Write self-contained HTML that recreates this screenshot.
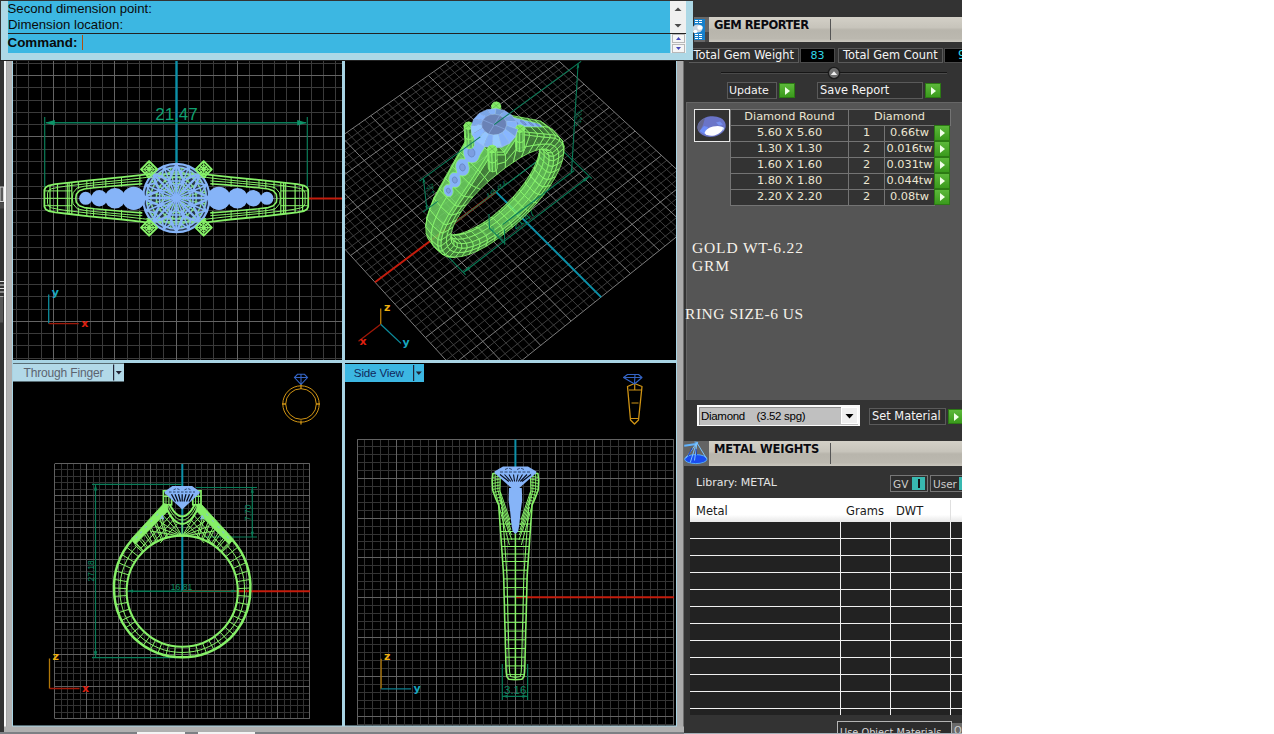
<!DOCTYPE html>
<html><head><meta charset="utf-8"><title>Gem Reporter</title>
<style>
html,body{margin:0;padding:0;background:#fff;}
body{width:1274px;height:734px;overflow:hidden;position:relative;font-family:"DejaVu Sans","Liberation Sans",sans-serif;}
#app{position:absolute;left:0;top:0;width:962px;height:734px;background:#333;overflow:hidden;}
.abs{position:absolute;box-sizing:border-box;}
#cmd{left:1px;top:1px;width:692px;height:59px;background:#add8e6;z-index:5;}
#cmdtop{left:7px;top:0;width:662px;height:32px;background:#3cb7e2;font:13.200px/16px "Liberation Sans",sans-serif;color:#0a0a0a;padding:0;text-indent:-0.5px;white-space:nowrap;}
#cmdline{left:7px;top:33px;width:662px;height:19px;background:#3cb7e2;font:bold 13.400px/17px "Liberation Sans",sans-serif;color:#0a0a0a;padding:0;text-indent:-0.5px;}
#cmdsep{left:7px;top:32px;width:678px;height:1px;background:#222;}
#sb1{left:669px;top:0;width:16px;height:32px;background:#f0f0f0;}
#sb2{left:670px;top:33px;width:15px;height:19px;background:#f4f4f4;}
.hdr{left:694px;width:268px;height:25px;background:linear-gradient(#d3d0c7,#c7c4bb 42%,#b8b5ac 52%,#bbb8af 86%,#cac7be);font:bold 11.5px/12px "DejaVu Sans","Liberation Sans",sans-serif;color:#0a0a10;}
.hdr span{position:absolute;left:20px;top:1.5px;}
.hdr i{position:absolute;left:136px;top:2px;width:1px;height:21px;background:#555;}
.lbl{background:#2e2e2e;border:1px solid #5a5a5a;color:#f4f4f4;font:11.4px/13px "DejaVu Sans","Liberation Sans",sans-serif;white-space:nowrap;overflow:hidden;}
.blk{background:#000;border:1px solid #4a4a4a;color:#2fd8e8;font:11px/13px "DejaVu Sans","Liberation Sans",sans-serif;text-align:center;overflow:hidden;}
.go{background:linear-gradient(#5cb83a,#3a9a1c);border:1px solid #2c7a14;}
.go:after{content:"";position:absolute;left:5px;top:3px;border-left:5px solid #f0ffe8;border-top:4px solid transparent;border-bottom:4px solid transparent;}
#gpanel{left:686px;top:102px;width:276px;height:298px;background:#555;border-top:1px solid #666;border-left:1px solid #666;}
.gt{background:#333;border:1px solid #747474;color:#ece6d2;font:11.3px/14.500px "DejaVu Sans","Liberation Sans",sans-serif;text-align:center;white-space:nowrap;overflow:hidden;}
.ser{font-family:"Liberation Serif","DejaVu Serif",serif;color:#f6f2ea;font-size:15.5px;line-height:18px;white-space:nowrap;letter-spacing:0.2px;}
.mrow{left:690px;width:272px;height:1px;background:#f0f0f0;}
.mcol{top:522px;width:1px;height:193px;background:#f0f0f0;}
.vlabel{font:12.5px/18px "Liberation Sans",sans-serif;white-space:nowrap;}
</style></head>
<body>
<div id="app">
<svg class="abs" style="left:0;top:0" width="684" height="734" viewBox="0 0 684 734">
<defs><clipPath id="cTL"><rect x="13" y="61" width="329" height="299"/></clipPath><clipPath id="cTR"><rect x="345" y="61" width="331" height="299"/></clipPath><clipPath id="cBL"><rect x="13" y="363" width="329" height="362.500"/></clipPath><clipPath id="cBR"><rect x="345" y="363" width="331" height="362.500"/></clipPath></defs>
<rect x="0" y="0" width="684" height="734" fill="#333"/>
<rect x="4" y="60" width="2.500" height="674" fill="#fafafa"/>
<rect x="6.500" y="60" width="6" height="674" fill="#b2b2b2"/>
<rect x="12" y="60" width="665" height="667" fill="#a8d4e4"/>
<rect x="677" y="60" width="6.500" height="674" fill="#aaaaaa"/>
<rect x="4" y="726.500" width="680" height="5.500" fill="#b0b0b0"/>
<rect x="0" y="732" width="684" height="2" fill="#7c8084"/>
<rect x="137" y="732" width="48" height="2" fill="#f4f4f4"/><rect x="198" y="732" width="57" height="2" fill="#f4f4f4"/>
<rect x="0" y="60" width="693" height="1" fill="#222"/>
<rect x="0" y="187" width="3.500" height="14.500" fill="#5a5a5a" stroke="#d0d0d0" stroke-width="1"/>
<rect x="0" y="202.500" width="4" height="6" fill="#4c4c4c"/>
<path d="M0 281.500h4M0 285h4M0 288.500h4M0 292h4" stroke="#d8d8d8" stroke-width="1.200"/>
<rect x="0" y="296.500" width="3" height="26" fill="#565656"/><rect x="0" y="296" width="3.500" height="1" fill="#aaa"/>
<rect x="13" y="61" width="329" height="299" fill="#000"/>
<rect x="345" y="61" width="331" height="299" fill="#000"/>
<rect x="13" y="363" width="329" height="362.500" fill="#000"/>
<rect x="345" y="363" width="331" height="362.500" fill="#000"/>
<g clip-path="url(#cTL)"><path d="M16.5 61V360M28.5 61V360M41.5 61V360M65.5 61V360M77.5 61V360M90.5 61V360M102.5 61V360M127.5 61V360M139.5 61V360M151.5 61V360M163.5 61V360M188.5 61V360M200.5 61V360M213.5 61V360M225.5 61V360M249.5 61V360M262.5 61V360M274.5 61V360M286.5 61V360M311.5 61V360M323.5 61V360M335.5 61V360M13 63.5H342M13 87.5H342M13 100.5H342M13 112.5H342M13 124.5H342M13 149.5H342M13 161.5H342M13 173.5H342M13 186.5H342M13 210.5H342M13 222.5H342M13 235.5H342M13 247.5H342M13 272.5H342M13 284.5H342M13 296.5H342M13 309.5H342M13 333.5H342M13 345.5H342M13 358.5H342" stroke="#3a3a3a" stroke-width="1.0" fill="none"/>
<path d="M53.5 61V360M114.5 61V360M176.5 61V360M237.5 61V360M299.5 61V360M13 75.5H342M13 136.5H342M13 198.5H342M13 259.5H342M13 321.5H342" stroke="#646464" stroke-width="1.0" fill="none"/>
<path d="M176.500 61V198.3" stroke="#0c90a8" stroke-width="2.400" fill="none"/>
<path d="M308 198.600H342" stroke="#c41c0c" stroke-width="2" fill="none"/>
<path d="M44.700 117V187M307.300 117V187" stroke="#0a7c58" stroke-width="1.200" fill="none"/>
<path d="M46 122.700H306" stroke="#0a7c58" stroke-width="1.600" fill="none"/>
<path d="M45.300 122.700l9.500 -2.800v5.600ZM306.700 122.700l-9.500 -2.800v5.600Z" fill="#0c9468"/>
<text x="176.500" y="119.800" text-anchor="middle" fill="#10a070" font-family="Liberation Sans,sans-serif" font-size="17">21.47</text>
<path d="M206.3 174.3 L210 174.8 L230.3 177.1 L263.3 180.3 L283.3 182.6 L297.3 184.2 L304 185.6 L307 187.4 L308.2 190 L308.2 206.6 L307 209.2 L304 211 L297.3 212.4 L283.3 214 L263.3 216.3 L230.3 219.5 L210 221.8 L206.3 222.3" stroke="#86f068" stroke-width="1.800" fill="none" stroke-linejoin="round"/>
<path d="M206.3 177.4 L210 177.9 L230.3 180.2 L263.3 183.4 L283.3 185.7 L294.2 187.3 L300.9 188.7 L303.9 190.5 L305.1 193.1 L305.1 203.5 L303.9 206.1 L300.9 207.9 L294.2 209.3 L283.3 210.9 L263.3 213.2 L230.3 216.4 L210 218.7 L206.3 219.2" stroke="#86f068" stroke-width="1" fill="none" stroke-linejoin="round"/>
<path d="M210.3 183.7 L226.3 184.9 L242.3 186.3 L258.3 187.8 L268.3 189 L273.3 190.8 L276.3 194.3 L276.8 198.3 L276.3 202.3 L273.3 205.8 L268.3 207.6 L258.3 208.8 L242.3 210.3 L226.3 211.7 L210.3 212.9" stroke="#86f068" stroke-width="1.600" fill="none" stroke-linejoin="round"/>
<path d="M210.3 180.9 L226.3 182.1 L242.3 183.5 L258.3 185 L268.3 186.2 L275.3 187.8 L279.6 192.8 L280.3 198.3 L279.6 203.8 L275.3 208.8 L268.3 210.4 L258.3 211.6 L242.3 213.1 L226.3 214.5 L210.3 215.7" stroke="#86f068" stroke-width="1" fill="none" stroke-linejoin="round"/>
<path d="M212.7 175.1V185.6M212.7 211V221.5M231.1 177.2V186.7M231.1 209.9V219.4M246.8 178.7V187.5M246.8 209.1V217.9M259 179.9V188M259 208.6V216.7M265.8 180.6V188.4M265.8 208.2V216M274 181.5V188.9M274 207.7V215.1" stroke="#86f068" stroke-width="1" fill="none"/>
<path d="M280.8 182.3V214.3M283.5 182.6V214M285.3 182.8V213.8M295.1 183.9V212.7M302.6 185.3V211.3" stroke="#86f068" stroke-width="1.200" fill="none"/>
<path d="M280.8 190.9H307.8M280.8 198.3H307.8M280.8 205.7H307.8" stroke="#86f068" stroke-width="1" fill="none"/>
<circle cx="218.9" cy="198.3" r="11.6" fill="#86b4f8"/>
<circle cx="237.5" cy="198.3" r="10.3" fill="#86b4f8"/>
<circle cx="253.3" cy="198.3" r="8.2" fill="#86b4f8"/>
<circle cx="266.9" cy="198.3" r="6.5" fill="#86b4f8"/>
<path d="M146.3 174.3 L142.6 174.8 L122.3 177.1 L89.3 180.3 L69.3 182.6 L55.3 184.2 L48.6 185.6 L45.6 187.4 L44.4 190 L44.4 206.6 L45.6 209.2 L48.6 211 L55.3 212.4 L69.3 214 L89.3 216.3 L122.3 219.5 L142.6 221.8 L146.3 222.3" stroke="#86f068" stroke-width="1.800" fill="none" stroke-linejoin="round"/>
<path d="M146.3 177.4 L142.6 177.9 L122.3 180.2 L89.3 183.4 L69.3 185.7 L58.4 187.3 L51.7 188.7 L48.7 190.5 L47.5 193.1 L47.5 203.5 L48.7 206.1 L51.7 207.9 L58.4 209.3 L69.3 210.9 L89.3 213.2 L122.3 216.4 L142.6 218.7 L146.3 219.2" stroke="#86f068" stroke-width="1" fill="none" stroke-linejoin="round"/>
<path d="M142.3 183.7 L126.3 184.9 L110.3 186.3 L94.3 187.8 L84.3 189 L79.3 190.8 L76.3 194.3 L75.8 198.3 L76.3 202.3 L79.3 205.8 L84.3 207.6 L94.3 208.8 L110.3 210.3 L126.3 211.7 L142.3 212.9" stroke="#86f068" stroke-width="1.600" fill="none" stroke-linejoin="round"/>
<path d="M142.3 180.9 L126.3 182.1 L110.3 183.5 L94.3 185 L84.3 186.2 L77.3 187.8 L73 192.8 L72.3 198.3 L73 203.8 L77.3 208.8 L84.3 210.4 L94.3 211.6 L110.3 213.1 L126.3 214.5 L142.3 215.7" stroke="#86f068" stroke-width="1" fill="none" stroke-linejoin="round"/>
<path d="M139.9 175.1V185.6M139.9 211V221.5M121.5 177.2V186.7M121.5 209.9V219.4M105.8 178.7V187.5M105.8 209.1V217.9M93.6 179.9V188M93.6 208.6V216.7M86.8 180.6V188.4M86.8 208.2V216M78.6 181.5V188.9M78.6 207.7V215.1" stroke="#86f068" stroke-width="1" fill="none"/>
<path d="M71.8 182.3V214.3M69.1 182.6V214M67.3 182.8V213.8M57.5 183.9V212.7M50 185.3V211.3" stroke="#86f068" stroke-width="1.200" fill="none"/>
<path d="M71.8 190.9H44.8M71.8 198.3H44.8M71.8 205.7H44.8" stroke="#86f068" stroke-width="1" fill="none"/>
<circle cx="133.7" cy="198.3" r="11.6" fill="#86b4f8"/>
<circle cx="115.1" cy="198.3" r="10.3" fill="#86b4f8"/>
<circle cx="99.3" cy="198.3" r="8.2" fill="#86b4f8"/>
<circle cx="85.7" cy="198.3" r="6.5" fill="#86b4f8"/>
<g transform="translate(0 198) scale(1 1.030) translate(0 -198)"><circle cx="176.3" cy="198" r="14" stroke="#86f068" stroke-width="1.400" fill="none"/>
<circle cx="176.3" cy="198" r="20" stroke="#86f068" stroke-width="1.400" fill="none"/>
<circle cx="176.3" cy="198" r="25.5" stroke="#86f068" stroke-width="1.400" fill="none"/>
<circle cx="176.3" cy="198" r="29.5" stroke="#86f068" stroke-width="1.400" fill="none"/>
<path d="M182.2 199.2L205.2 203.8M181.3 201.3L200.8 214.4M179.6 203L192.7 222.5M177.5 203.9L182.1 226.9M175.1 203.9L170.5 226.9M173 203L159.9 222.5M171.3 201.3L151.8 214.4M170.4 199.2L147.4 203.8M170.4 196.8L147.4 192.2M171.3 194.7L151.8 181.6M173 193L159.9 173.5M175.1 192.1L170.5 169.1M177.5 192.1L182.1 169.1M179.6 193L192.7 173.5M181.3 194.7L200.8 181.6M182.2 196.8L205.2 192.2" stroke="#86f068" stroke-width="1.200" fill="none"/>
<path d="M146.3 221.2H206.3M146.3 174.8H206.3M146.3 218.2H206.3M146.3 177.8H206.3" stroke="#86f068" stroke-width="1.600" fill="none"/>
<circle cx="176.3" cy="198" r="33.8" fill="#86b4f8" fill-opacity="0.30"/>
<circle cx="176.3" cy="198" r="33.2" stroke="#86b4f8" stroke-width="2.200" fill="none"/>
<circle cx="176.3" cy="198" r="30.2" stroke="#86b4f8" stroke-width="1.200" fill="none"/>
<path d="M176.3 196 L176.3 165.2M177.7 196.6 L199.5 174.8M178.3 198 L209.1 198M177.7 199.4 L199.5 221.2M176.3 200 L176.3 230.8M174.9 199.4 L153.1 221.2M174.3 198 L143.5 198M174.9 196.6 L153.1 174.8" stroke="#86b4f8" stroke-width="2.200" fill="none"/>
<path d="M177.1 196.2 L188.9 167.7M178.1 197.2 L206.6 185.4M178.1 198.8 L206.6 210.6M177.1 199.8 L188.9 228.3M175.5 199.8 L163.7 228.3M174.5 198.8 L146 210.6M174.5 197.2 L146 185.4M175.5 196.2 L163.7 167.7M176.3 165.2 L181.3 173 L188.9 167.7M188.9 167.7 L190.5 176.8 L199.5 174.8M199.5 174.8 L197.5 183.8 L206.6 185.4M206.6 185.4 L201.3 193 L209.1 198M209.1 198 L201.3 203 L206.6 210.6M206.6 210.6 L197.5 212.2 L199.5 221.2M199.5 221.2 L190.5 219.2 L188.9 228.3M188.9 228.3 L181.3 223 L176.3 230.8M176.3 230.8 L171.3 223 L163.7 228.3M163.7 228.3 L162.1 219.2 L153.1 221.2M153.1 221.2 L155.1 212.2 L146 210.6M146 210.6 L151.3 203 L143.5 198M143.5 198 L151.3 193 L146 185.4M146 185.4 L155.1 183.8 L153.1 174.8M153.1 174.8 L162.1 176.8 L163.7 167.7M163.7 167.7 L171.3 173 L176.3 165.2M176.3 165.2 L183.2 181.4 L199.5 174.8M183.2 181.4 L192.9 191.1M181.3 173 L183.2 181.4 L190.5 176.8M183.2 181.4 L183.8 193M183.2 181.4 L174.5 189.2M199.5 174.8 L192.9 191.1 L209.1 198M192.9 191.1 L192.9 204.9M197.5 183.8 L192.9 191.1 L201.3 193M192.9 191.1 L185.1 199.8M192.9 191.1 L181.3 190.5M209.1 198 L192.9 204.9 L199.5 221.2M192.9 204.9 L183.2 214.6M201.3 203 L192.9 204.9 L197.5 212.2M192.9 204.9 L181.3 205.5M192.9 204.9 L185.1 196.2M199.5 221.2 L183.2 214.6 L176.3 230.8M183.2 214.6 L169.4 214.6M190.5 219.2 L183.2 214.6 L181.3 223M183.2 214.6 L174.5 206.8M183.2 214.6 L183.8 203M176.3 230.8 L169.4 214.6 L153.1 221.2M169.4 214.6 L159.7 204.9M171.3 223 L169.4 214.6 L162.1 219.2M169.4 214.6 L168.8 203M169.4 214.6 L178.1 206.8M153.1 221.2 L159.7 204.9 L143.5 198M159.7 204.9 L159.7 191.1M155.1 212.2 L159.7 204.9 L151.3 203M159.7 204.9 L167.5 196.2M159.7 204.9 L171.3 205.5M143.5 198 L159.7 191.1 L153.1 174.8M159.7 191.1 L169.4 181.4M151.3 193 L159.7 191.1 L155.1 183.8M159.7 191.1 L171.3 190.5M159.7 191.1 L167.5 199.8M153.1 174.8 L169.4 181.4 L176.3 165.2M169.4 181.4 L183.2 181.4M162.1 176.8 L169.4 181.4 L171.3 173M169.4 181.4 L178.1 189.2M169.4 181.4 L168.8 193" stroke="#86b4f8" stroke-width="1.500" fill="none" stroke-linejoin="round"/>
<circle cx="176.3" cy="198" r="3.500" fill="#86b4f8"/></g>
<path d="M149.1 161.2 L157.2 169.3 L149.1 177.4 L141 169.3ZM149.1 164.3 L154.1 169.3 L149.1 174.3 L144.1 169.3ZM149.1 166.9 L151.5 169.3 L149.1 171.7 L146.7 169.3ZM149.1 161.2V177.4M141 169.3H157.2M145 165.2L153.2 173.4M145 173.4L153.2 165.2" stroke="#86f068" stroke-width="1.100" fill="none" stroke-linejoin="round"/>
<path d="M149.1 161.2 L157.2 169.3 L149.1 177.4 L141 169.3Z" stroke="#86f068" stroke-width="1.800" fill="none" stroke-linejoin="round"/>
<path d="M149.1 219.5 L157.2 227.6 L149.1 235.7 L141 227.6ZM149.1 222.6 L154.1 227.6 L149.1 232.6 L144.1 227.6ZM149.1 225.2 L151.5 227.6 L149.1 230 L146.7 227.6ZM149.1 219.5V235.7M141 227.6H157.2M145 223.5L153.2 231.7M145 231.7L153.2 223.5" stroke="#86f068" stroke-width="1.100" fill="none" stroke-linejoin="round"/>
<path d="M149.1 219.5 L157.2 227.6 L149.1 235.7 L141 227.6Z" stroke="#86f068" stroke-width="1.800" fill="none" stroke-linejoin="round"/>
<path d="M203.7 161.2 L211.8 169.3 L203.7 177.4 L195.6 169.3ZM203.7 164.3 L208.7 169.3 L203.7 174.3 L198.7 169.3ZM203.7 166.9 L206.1 169.3 L203.7 171.7 L201.3 169.3ZM203.7 161.2V177.4M195.6 169.3H211.8M199.6 165.2L207.8 173.4M199.6 173.4L207.8 165.2" stroke="#86f068" stroke-width="1.100" fill="none" stroke-linejoin="round"/>
<path d="M203.7 161.2 L211.8 169.3 L203.7 177.4 L195.6 169.3Z" stroke="#86f068" stroke-width="1.800" fill="none" stroke-linejoin="round"/>
<path d="M203.7 219.5 L211.8 227.6 L203.7 235.7 L195.6 227.6ZM203.7 222.6 L208.7 227.6 L203.7 232.6 L198.7 227.6ZM203.7 225.2 L206.1 227.6 L203.7 230 L201.3 227.6ZM203.7 219.5V235.7M195.6 227.6H211.8M199.6 223.5L207.8 231.7M199.6 231.7L207.8 223.5" stroke="#86f068" stroke-width="1.100" fill="none" stroke-linejoin="round"/>
<path d="M203.7 219.5 L211.8 227.6 L203.7 235.7 L195.6 227.6Z" stroke="#86f068" stroke-width="1.800" fill="none" stroke-linejoin="round"/>
<path d="M48.7 323.6V294.6" stroke="#0c8c9c" stroke-width="1.3" fill="none"/>
<path d="M48.7 323.6H78.7" stroke="#a01808" stroke-width="1.3" fill="none"/>
<text x="51.7" y="296.1" fill="#18a8c0" font-family="DejaVu Sans,Liberation Sans,sans-serif" font-weight="bold" font-size="11">y</text>
<text x="81.2" y="326.8" fill="#e02010" font-family="DejaVu Sans,Liberation Sans,sans-serif" font-weight="bold" font-size="11">x</text></g>
<g clip-path="url(#cTR)"><path d="M506 21.1L710.2 209.8M516.1 21.6L285.2 183.7M500.5 24.9L704.7 214.3M520.8 26L289.8 188.6M495.1 28.7L699.1 218.8M525.6 30.4L294.3 193.7M489.6 32.5L693.5 223.2M530.3 34.7L298.9 198.7M478.6 40.2L682.2 232.3M539.9 43.6L308.1 208.8M473.1 44.1L676.5 236.8M544.8 48L312.8 213.9M467.6 48L670.8 241.3M549.6 52.5L317.4 219M462 51.9L665.1 245.9M554.5 56.9L322.1 224.2M450.8 59.7L653.7 255.1M564.3 65.9L331.5 234.5M445.2 63.6L647.9 259.7M569.2 70.5L336.3 239.7M439.6 67.5L642.1 264.3M574.1 75L341 244.9M433.9 71.5L636.3 268.9M579.1 79.6L345.8 250.2M422.6 79.4L624.6 278.3M589.1 88.8L355.5 260.8M416.9 83.4L618.8 283M594.1 93.4L360.3 266.1M411.2 87.4L612.9 287.7M599.2 98.1L365.2 271.4M405.5 91.4L607 292.4M604.2 102.7L370.1 276.8M393.9 99.5L595.1 301.9M614.4 112.1L379.9 287.6M388.1 103.5L589.1 306.6M619.6 116.8L384.9 293.1M382.3 107.6L583.2 311.4M624.7 121.6L389.9 298.5M376.5 111.7L577.2 316.2M629.9 126.3L394.9 304M364.8 119.9L565.1 325.9M640.3 135.9L404.9 315.1M358.9 124L559 330.7M645.6 140.8L410 320.6M353 128.1L552.9 335.6M650.8 145.6L415.1 326.2M347.1 132.2L546.8 340.5M656.1 150.5L420.2 331.9M335.2 140.6L534.5 350.3M666.8 160.3L430.5 343.2M329.2 144.8L528.3 355.3M672.1 165.2L435.7 348.9M323.2 148.9L522.1 360.2M677.5 170.1L440.9 354.6M317.2 153.2L515.9 365.2M682.9 175.1L446.2 360.3M305.1 161.6L503.4 375.2M693.8 185.1L456.7 371.9M299 165.9L497.1 380.2M699.2 190.2L462 377.7M292.9 170.1L490.8 385.3M704.7 195.2L467.4 383.6M286.8 174.4L484.5 390.3M710.3 200.3L472.7 389.5" stroke="#444" stroke-width="0.900" fill="none"/>
<path d="M511.4 17.3L715.8 205.4M511.4 17.3L280.7 178.7M484.1 36.4L687.8 227.8M535.1 39.1L303.5 203.7M456.4 55.8L659.4 250.5M559.4 61.4L326.8 229.3M428.3 75.4L630.5 273.6M584.1 84.2L350.6 255.5M399.7 95.4L601.1 297.1M609.3 107.4L375 282.2M370.7 115.8L571.1 321M635.1 131.1L399.9 309.5M341.2 136.4L540.7 345.4M661.4 155.4L425.4 337.5M311.2 157.4L509.7 370.2M688.3 180.1L451.4 366.1M280.7 178.7L478.1 395.4M715.8 205.4L478.1 395.4" stroke="#7c7c7c" stroke-width="1" fill="none"/>
<path d="M496 191.9L375 282.2" stroke="#c41c0c" stroke-width="2" fill="none"/>
<path d="M496 191.9L601.1 297.1" stroke="#0c90a8" stroke-width="2" fill="none"/>
<path d="M544.5 155.7L446.2 229.1" stroke="#0a7c58" stroke-width="1.1" fill="none"/>
<path d="M544.5 155.7 L538.8 159.2 L538.8 160.8Z" fill="#0a7c58"/>
<path d="M446.2 229.1 L452.1 223.8 L452.2 225.4Z" fill="#0a7c58"/>
<text transform="matrix(5.850 -4.362 0.103 3.742 496.0 190.8)" text-anchor="middle" fill="#0c8c64" font-family="Liberation Sans,sans-serif" font-size="1.4">16.81</text>
<path d="M589.5 176.3L463.3 272.5" stroke="#0a7c58" stroke-width="1.1" fill="none"/>
<path d="M562.5 150.6L591.8 178.6" stroke="#0a7c58" stroke-width="1.1" fill="none"/>
<path d="M436.8 244.7L465.6 274.9" stroke="#0a7c58" stroke-width="1.1" fill="none"/>
<path d="M589.5 176.3 L584.9 181.8 L582.6 179.6Z" fill="#0a7c58"/>
<path d="M463.3 272.5 L470.5 269 L468.2 266.6Z" fill="#0a7c58"/>
<text transform="matrix(5.868 -4.464 5.144 5.152 526.0 222.0)" text-anchor="middle" fill="#0c8c64" font-family="Liberation Sans,sans-serif" font-size="1.4">21.47</text>
<path d="M519.7 218.2 L521.1 219.7 L529.4 211.4 L527.5 210.5Z" fill="#4c9143" stroke="#8cf86e" stroke-width="0.800" stroke-linejoin="round" fill-opacity="0.840"/>
<path d="M511.6 225.4 L512.3 227.5 L521.1 219.7 L519.7 218.2Z" fill="#4c9143" stroke="#8cf86e" stroke-width="0.800" stroke-linejoin="round" fill-opacity="0.840"/>
<path d="M506.1 204.3 L507.6 205.8 L514.4 198.8 L513.1 197Z" fill="#66c35a" stroke="#8cf86e" stroke-width="0.800" stroke-linejoin="round" fill-opacity="0.840"/>
<path d="M527.5 210.5 L529.4 211.4 L537.2 202.8 L534.7 202.5Z" fill="#4c9143" stroke="#8cf86e" stroke-width="0.800" stroke-linejoin="round" fill-opacity="0.840"/>
<path d="M498.6 211.1 L500.5 212.3 L507.6 205.8 L506.1 204.3Z" fill="#65c059" stroke="#8cf86e" stroke-width="0.800" stroke-linejoin="round" fill-opacity="0.840"/>
<path d="M513.1 197 L514.4 198.8 L520.6 191.6 L519.5 189.4Z" fill="#67c55b" stroke="#8cf86e" stroke-width="0.800" stroke-linejoin="round" fill-opacity="0.840"/>
<path d="M503.2 232 L503.3 234.6 L512.3 227.5 L511.6 225.4Z" fill="#4c9243" stroke="#8cf86e" stroke-width="0.800" stroke-linejoin="round" fill-opacity="0.840"/>
<path d="M491 217.4 L493.2 218.3 L500.5 212.3 L498.6 211.1Z" fill="#62bb57" stroke="#8cf86e" stroke-width="0.800" stroke-linejoin="round" fill-opacity="0.840"/>
<path d="M534.7 202.5 L537.2 202.8 L544.3 194 L541.2 194.4Z" fill="#4c9143" stroke="#8cf86e" stroke-width="0.800" stroke-linejoin="round" fill-opacity="0.840"/>
<path d="M507.6 205.8 L511.4 209.5 L518.2 202.6 L514.4 198.8Z" fill="#76e269" stroke="#8cf86e" stroke-width="0.800" stroke-linejoin="round" fill-opacity="0.840"/>
<path d="M519.5 189.4 L520.6 191.6 L526.1 184.2 L525.3 181.8Z" fill="#67c45b" stroke="#8cf86e" stroke-width="0.800" stroke-linejoin="round" fill-opacity="0.840"/>
<path d="M518.2 216.5 L519.7 218.2 L527.5 210.5 L525.4 209.3Z" fill="#529d49" stroke="#8cf86e" stroke-width="0.800" stroke-linejoin="round" fill-opacity="0.840"/>
<path d="M500.5 212.3 L504.2 216 L511.4 209.5 L507.6 205.8Z" fill="#74dd67" stroke="#8cf86e" stroke-width="0.800" stroke-linejoin="round" fill-opacity="0.840"/>
<path d="M510.6 223.2 L511.6 225.4 L519.7 218.2 L518.2 216.5Z" fill="#529c48" stroke="#8cf86e" stroke-width="0.800" stroke-linejoin="round" fill-opacity="0.840"/>
<path d="M514.4 198.8 L518.2 202.6 L524.4 195.5 L520.6 191.6Z" fill="#77e369" stroke="#8cf86e" stroke-width="0.800" stroke-linejoin="round" fill-opacity="0.840"/>
<path d="M525.4 209.3 L527.5 210.5 L534.7 202.5 L532.1 201.9Z" fill="#529d48" stroke="#8cf86e" stroke-width="0.800" stroke-linejoin="round" fill-opacity="0.840"/>
<path d="M495 238 L494.4 241.1 L503.3 234.6 L503.2 232Z" fill="#4c9043" stroke="#8cf86e" stroke-width="0.800" stroke-linejoin="round" fill-opacity="0.840"/>
<path d="M483.2 222.8 L485.7 223.5 L493.2 218.3 L491 217.4Z" fill="#5eb453" stroke="#8cf86e" stroke-width="0.800" stroke-linejoin="round" fill-opacity="0.840"/>
<path d="M493.2 218.3 L496.8 221.9 L504.2 216 L500.5 212.3Z" fill="#71d764" stroke="#8cf86e" stroke-width="0.800" stroke-linejoin="round" fill-opacity="0.840"/>
<path d="M511.4 209.5 L515.2 213.4 L522.1 206.5 L518.2 202.6Z" fill="#77e369" stroke="#8cf86e" stroke-width="0.800" stroke-linejoin="round" fill-opacity="0.840"/>
<path d="M502.8 229.4 L503.2 232 L511.6 225.4 L510.6 223.2Z" fill="#529c48" stroke="#8cf86e" stroke-width="0.800" stroke-linejoin="round" fill-opacity="0.840"/>
<path d="M504.2 216 L508 219.8 L515.2 213.4 L511.4 209.5Z" fill="#75de67" stroke="#8cf86e" stroke-width="0.800" stroke-linejoin="round" fill-opacity="0.840"/>
<path d="M515.2 213.4 L518.2 216.5 L525.4 209.3 L522.1 206.5Z" fill="#70d663" stroke="#8cf86e" stroke-width="0.800" stroke-linejoin="round" fill-opacity="0.840"/>
<path d="M520.6 191.6 L524.4 195.5 L530.1 188.2 L526.1 184.2Z" fill="#77e369" stroke="#8cf86e" stroke-width="0.800" stroke-linejoin="round" fill-opacity="0.840"/>
<path d="M508 219.8 L510.6 223.2 L518.2 216.5 L515.2 213.4Z" fill="#6fd362" stroke="#8cf86e" stroke-width="0.800" stroke-linejoin="round" fill-opacity="0.840"/>
<path d="M518.2 202.6 L522.1 206.5 L528.5 199.4 L524.4 195.5Z" fill="#78e46a" stroke="#8cf86e" stroke-width="0.800" stroke-linejoin="round" fill-opacity="0.840"/>
<path d="M541.2 194.4 L544.3 194 L550.4 185.3 L546.8 186.3Z" fill="#4c9143" stroke="#8cf86e" stroke-width="0.800" stroke-linejoin="round" fill-opacity="0.840"/>
<path d="M525.3 181.8 L526.1 184.2 L530.9 176.9 L530.3 174.1Z" fill="#65c25a" stroke="#8cf86e" stroke-width="0.800" stroke-linejoin="round" fill-opacity="0.840"/>
<path d="M532.1 201.9 L534.7 202.5 L541.2 194.4 L538.1 194.3Z" fill="#529c48" stroke="#8cf86e" stroke-width="0.800" stroke-linejoin="round" fill-opacity="0.840"/>
<path d="M522.1 206.5 L525.4 209.3 L532.1 201.9 L528.5 199.4Z" fill="#71d764" stroke="#8cf86e" stroke-width="0.800" stroke-linejoin="round" fill-opacity="0.840"/>
<path d="M496.8 221.9 L500.5 225.7 L508 219.8 L504.2 216Z" fill="#71d864" stroke="#8cf86e" stroke-width="0.800" stroke-linejoin="round" fill-opacity="0.840"/>
<path d="M500.5 225.7 L502.8 229.4 L510.6 223.2 L508 219.8Z" fill="#6cce5f" stroke="#8cf86e" stroke-width="0.800" stroke-linejoin="round" fill-opacity="0.840"/>
<path d="M485.7 223.5 L489.4 227.2 L496.8 221.9 L493.2 218.3Z" fill="#6cce60" stroke="#8cf86e" stroke-width="0.800" stroke-linejoin="round" fill-opacity="0.840"/>
<path d="M524.4 195.5 L528.5 199.4 L534.2 192.2 L530.1 188.2Z" fill="#77e46a" stroke="#8cf86e" stroke-width="0.800" stroke-linejoin="round" fill-opacity="0.840"/>
<path d="M495.1 234.9 L495 238 L503.2 232 L502.8 229.4Z" fill="#509947" stroke="#8cf86e" stroke-width="0.800" stroke-linejoin="round" fill-opacity="0.840"/>
<path d="M528.5 199.4 L532.1 201.9 L538.1 194.3 L534.2 192.2Z" fill="#71d764" stroke="#8cf86e" stroke-width="0.800" stroke-linejoin="round" fill-opacity="0.840"/>
<path d="M475.4 227.3 L478.3 227.8 L485.7 223.5 L483.2 222.8Z" fill="#5aac4f" stroke="#8cf86e" stroke-width="0.800" stroke-linejoin="round" fill-opacity="0.840"/>
<path d="M486.8 243.1 L485.6 246.7 L494.4 241.1 L495 238Z" fill="#4c9043" stroke="#8cf86e" stroke-width="0.800" stroke-linejoin="round" fill-opacity="0.840"/>
<path d="M526.1 184.2 L530.1 188.2 L534.9 181 L530.9 176.9Z" fill="#75e068" stroke="#8cf86e" stroke-width="0.800" stroke-linejoin="round" fill-opacity="0.840"/>
<path d="M489.4 227.2 L493.1 231.1 L500.5 225.7 L496.8 221.9Z" fill="#6dcf60" stroke="#8cf86e" stroke-width="0.800" stroke-linejoin="round" fill-opacity="0.840"/>
<path d="M538.1 194.3 L541.2 194.4 L546.8 186.3 L543.2 186.8Z" fill="#519c48" stroke="#8cf86e" stroke-width="0.800" stroke-linejoin="round" fill-opacity="0.840"/>
<path d="M493.1 231.1 L495.1 234.9 L502.8 229.4 L500.5 225.7Z" fill="#68c75c" stroke="#8cf86e" stroke-width="0.800" stroke-linejoin="round" fill-opacity="0.840"/>
<path d="M530.3 174.1 L530.9 176.9 L534.7 169.8 L534.3 166.7Z" fill="#63bd58" stroke="#8cf86e" stroke-width="0.800" stroke-linejoin="round" fill-opacity="0.840"/>
<path d="M546.8 186.3 L550.4 185.3 L555.6 176.7 L551.5 178.4Z" fill="#4c9143" stroke="#8cf86e" stroke-width="0.800" stroke-linejoin="round" fill-opacity="0.840"/>
<path d="M530.1 188.2 L534.2 192.2 L539.2 185 L534.9 181Z" fill="#76e168" stroke="#8cf86e" stroke-width="0.800" stroke-linejoin="round" fill-opacity="0.840"/>
<path d="M478.3 227.8 L482.1 231.6 L489.4 227.2 L485.7 223.5Z" fill="#67c45b" stroke="#8cf86e" stroke-width="0.800" stroke-linejoin="round" fill-opacity="0.840"/>
<path d="M534.2 192.2 L538.1 194.3 L543.2 186.8 L539.2 185Z" fill="#6fd462" stroke="#8cf86e" stroke-width="0.800" stroke-linejoin="round" fill-opacity="0.840"/>
<path d="M487.5 239.7 L486.8 243.1 L495 238 L495.1 234.9Z" fill="#509846" stroke="#8cf86e" stroke-width="0.800" stroke-linejoin="round" fill-opacity="0.840"/>
<path d="M530.9 176.9 L534.9 181 L538.8 174 L534.7 169.8Z" fill="#73db65" stroke="#8cf86e" stroke-width="0.800" stroke-linejoin="round" fill-opacity="0.840"/>
<path d="M482.1 231.6 L485.9 235.6 L493.1 231.1 L489.4 227.2Z" fill="#67c55b" stroke="#8cf86e" stroke-width="0.800" stroke-linejoin="round" fill-opacity="0.840"/>
<path d="M468 230.9 L471.2 231.3 L478.3 227.8 L475.4 227.3Z" fill="#55a24b" stroke="#8cf86e" stroke-width="0.800" stroke-linejoin="round" fill-opacity="0.840"/>
<path d="M485.9 235.6 L487.5 239.7 L495.1 234.9 L493.1 231.1Z" fill="#64be58" stroke="#8cf86e" stroke-width="0.800" stroke-linejoin="round" fill-opacity="0.840"/>
<path d="M543.2 186.8 L546.8 186.3 L551.5 178.4 L547.5 179.6Z" fill="#519b48" stroke="#8cf86e" stroke-width="0.800" stroke-linejoin="round" fill-opacity="0.840"/>
<path d="M479 247.3 L477.1 251.1 L485.6 246.7 L486.8 243.1Z" fill="#4b9043" stroke="#8cf86e" stroke-width="0.800" stroke-linejoin="round" fill-opacity="0.840"/>
<path d="M534.9 181 L539.2 185 L543.2 178.1 L538.8 174Z" fill="#73dc66" stroke="#8cf86e" stroke-width="0.800" stroke-linejoin="round" fill-opacity="0.840"/>
<path d="M534.3 166.7 L534.7 169.8 L537.6 163.1 L537.3 159.7Z" fill="#60b855" stroke="#8cf86e" stroke-width="0.800" stroke-linejoin="round" fill-opacity="0.840"/>
<path d="M471.2 231.3 L475.1 235.1 L482.1 231.6 L478.3 227.8Z" fill="#60b855" stroke="#8cf86e" stroke-width="0.800" stroke-linejoin="round" fill-opacity="0.840"/>
<path d="M539.2 185 L543.2 186.8 L547.5 179.6 L543.2 178.1Z" fill="#6dd060" stroke="#8cf86e" stroke-width="0.800" stroke-linejoin="round" fill-opacity="0.840"/>
<path d="M551.5 178.4 L555.6 176.7 L559.6 168.5 L555.1 170.9Z" fill="#4c9143" stroke="#8cf86e" stroke-width="0.800" stroke-linejoin="round" fill-opacity="0.840"/>
<path d="M480.2 243.5 L479 247.3 L486.8 243.1 L487.5 239.7Z" fill="#4f9646" stroke="#8cf86e" stroke-width="0.800" stroke-linejoin="round" fill-opacity="0.840"/>
<path d="M475.1 235.1 L478.9 239.2 L485.9 235.6 L482.1 231.6Z" fill="#61b956" stroke="#8cf86e" stroke-width="0.800" stroke-linejoin="round" fill-opacity="0.840"/>
<path d="M534.7 169.8 L538.8 174 L541.8 167.4 L537.6 163.1Z" fill="#6fd362" stroke="#8cf86e" stroke-width="0.800" stroke-linejoin="round" fill-opacity="0.840"/>
<path d="M478.9 239.2 L480.2 243.5 L487.5 239.7 L485.9 235.6Z" fill="#5fb554" stroke="#8cf86e" stroke-width="0.800" stroke-linejoin="round" fill-opacity="0.840"/>
<path d="M461 233.4 L464.5 233.7 L471.2 231.3 L468 230.9Z" fill="#4f9846" stroke="#8cf86e" stroke-width="0.800" stroke-linejoin="round" fill-opacity="0.840"/>
<path d="M547.5 179.6 L551.5 178.4 L555.1 170.9 L550.7 172.7Z" fill="#509947" stroke="#8cf86e" stroke-width="0.800" stroke-linejoin="round" fill-opacity="0.840"/>
<path d="M538.8 174 L543.2 178.1 L546.3 171.5 L541.8 167.4Z" fill="#6fd462" stroke="#8cf86e" stroke-width="0.800" stroke-linejoin="round" fill-opacity="0.840"/>
<path d="M471.6 250.3 L469 254.5 L477.1 251.1 L479 247.3Z" fill="#4b9043" stroke="#8cf86e" stroke-width="0.800" stroke-linejoin="round" fill-opacity="0.840"/>
<path d="M543.2 178.1 L547.5 179.6 L550.7 172.7 L546.3 171.5Z" fill="#6aca5e" stroke="#8cf86e" stroke-width="0.800" stroke-linejoin="round" fill-opacity="0.840"/>
<path d="M464.5 233.7 L468.5 237.6 L475.1 235.1 L471.2 231.3Z" fill="#59aa4f" stroke="#8cf86e" stroke-width="0.800" stroke-linejoin="round" fill-opacity="0.840"/>
<path d="M537.3 159.7 L537.6 163.1 L539.4 156.9 L539.2 153.2Z" fill="#5cb052" stroke="#8cf86e" stroke-width="0.800" stroke-linejoin="round" fill-opacity="0.840"/>
<path d="M473.4 246.2 L471.6 250.3 L479 247.3 L480.2 243.5Z" fill="#4e9545" stroke="#8cf86e" stroke-width="0.800" stroke-linejoin="round" fill-opacity="0.840"/>
<path d="M468.5 237.6 L472.4 241.8 L478.9 239.2 L475.1 235.1Z" fill="#5aac4f" stroke="#8cf86e" stroke-width="0.800" stroke-linejoin="round" fill-opacity="0.840"/>
<path d="M555.1 170.9 L559.6 168.5 L562.3 160.9 L557.4 164Z" fill="#4c9043" stroke="#8cf86e" stroke-width="0.800" stroke-linejoin="round" fill-opacity="0.840"/>
<path d="M537.6 163.1 L541.8 167.4 L543.6 161.3 L539.4 156.9Z" fill="#6aca5d" stroke="#8cf86e" stroke-width="0.800" stroke-linejoin="round" fill-opacity="0.840"/>
<path d="M472.4 241.8 L473.4 246.2 L480.2 243.5 L478.9 239.2Z" fill="#59ab4f" stroke="#8cf86e" stroke-width="0.800" stroke-linejoin="round" fill-opacity="0.840"/>
<path d="M454.6 234.8 L458.4 235 L464.5 233.7 L461 233.4Z" fill="#4a8d41" stroke="#8cf86e" stroke-width="0.800" stroke-linejoin="round" fill-opacity="0.840"/>
<path d="M541.8 167.4 L546.3 171.5 L548.3 165.5 L543.6 161.3Z" fill="#6acb5e" stroke="#8cf86e" stroke-width="0.800" stroke-linejoin="round" fill-opacity="0.840"/>
<path d="M550.7 172.7 L555.1 170.9 L557.4 164 L552.8 166.4Z" fill="#509846" stroke="#8cf86e" stroke-width="0.800" stroke-linejoin="round" fill-opacity="0.840"/>
<path d="M546.3 171.5 L550.7 172.7 L552.8 166.4 L548.3 165.5Z" fill="#66c35a" stroke="#8cf86e" stroke-width="0.800" stroke-linejoin="round" fill-opacity="0.840"/>
<path d="M458.4 235 L462.5 239 L468.5 237.6 L464.5 233.7Z" fill="#529c48" stroke="#8cf86e" stroke-width="0.800" stroke-linejoin="round" fill-opacity="0.840"/>
<path d="M539.2 153.2 L539.4 156.9 L540 151.3 L539.8 147.4Z" fill="#58a74d" stroke="#8cf86e" stroke-width="0.800" stroke-linejoin="round" fill-opacity="0.840"/>
<path d="M464.8 252.1 L461.7 256.5 L469 254.5 L471.6 250.3Z" fill="#4b9043" stroke="#8cf86e" stroke-width="0.800" stroke-linejoin="round" fill-opacity="0.840"/>
<path d="M462.5 239 L466.4 243.3 L472.4 241.8 L468.5 237.6Z" fill="#529d49" stroke="#8cf86e" stroke-width="0.800" stroke-linejoin="round" fill-opacity="0.840"/>
<path d="M467.2 247.8 L464.8 252.1 L471.6 250.3 L473.4 246.2Z" fill="#4d9344" stroke="#8cf86e" stroke-width="0.800" stroke-linejoin="round" fill-opacity="0.840"/>
<path d="M539.4 156.9 L543.6 161.3 L544.4 155.9 L540 151.3Z" fill="#64be58" stroke="#8cf86e" stroke-width="0.800" stroke-linejoin="round" fill-opacity="0.840"/>
<path d="M466.4 243.3 L467.2 247.8 L473.4 246.2 L472.4 241.8Z" fill="#539f4a" stroke="#8cf86e" stroke-width="0.800" stroke-linejoin="round" fill-opacity="0.840"/>
<path d="M557.4 164 L562.3 160.9 L563.6 154.1 L558.6 157.8Z" fill="#4c9043" stroke="#8cf86e" stroke-width="0.800" stroke-linejoin="round" fill-opacity="0.840"/>
<path d="M449 235 L453 235.2 L458.4 235 L454.6 234.8Z" fill="#44823c" stroke="#8cf86e" stroke-width="0.800" stroke-linejoin="round" fill-opacity="0.840"/>
<path d="M543.6 161.3 L548.3 165.5 L549.1 160.1 L544.4 155.9Z" fill="#64bf59" stroke="#8cf86e" stroke-width="0.800" stroke-linejoin="round" fill-opacity="0.840"/>
<path d="M552.8 166.4 L557.4 164 L558.6 157.8 L553.7 160.8Z" fill="#4f9746" stroke="#8cf86e" stroke-width="0.800" stroke-linejoin="round" fill-opacity="0.840"/>
<path d="M548.3 165.5 L552.8 166.4 L553.7 160.8 L549.1 160.1Z" fill="#62ba56" stroke="#8cf86e" stroke-width="0.800" stroke-linejoin="round" fill-opacity="0.840"/>
<path d="M453 235.2 L457.3 239.3 L462.5 239 L458.4 235Z" fill="#4a8d41" stroke="#8cf86e" stroke-width="0.800" stroke-linejoin="round" fill-opacity="0.840"/>
<path d="M458.9 252.7 L455.2 257.2 L461.7 256.5 L464.8 252.1Z" fill="#4b9043" stroke="#8cf86e" stroke-width="0.800" stroke-linejoin="round" fill-opacity="0.840"/>
<path d="M457.3 239.3 L461.3 243.7 L466.4 243.3 L462.5 239Z" fill="#4a8e42" stroke="#8cf86e" stroke-width="0.800" stroke-linejoin="round" fill-opacity="0.840"/>
<path d="M540 151.3 L544.4 155.9 L543.9 151.3 L539.2 146.4Z" fill="#5db252" stroke="#8cf86e" stroke-width="0.800" stroke-linejoin="round" fill-opacity="0.840"/>
<path d="M461.8 248.3 L458.9 252.7 L464.8 252.1 L467.2 247.8Z" fill="#4c9143" stroke="#8cf86e" stroke-width="0.800" stroke-linejoin="round" fill-opacity="0.840"/>
<path d="M461.3 243.7 L461.8 248.3 L467.2 247.8 L466.4 243.3Z" fill="#4d9444" stroke="#8cf86e" stroke-width="0.800" stroke-linejoin="round" fill-opacity="0.840"/>
<path d="M563.6 154.1 L563.8 151.5 L563.9 145.7 L563.7 148.4Z" fill="#44823c" stroke="#8cf86e" stroke-width="0.800" stroke-linejoin="round" fill-opacity="0.840"/>
<path d="M544.4 155.9 L549.1 160.1 L549 155.8 L543.9 151.3Z" fill="#5eb353" stroke="#8cf86e" stroke-width="0.800" stroke-linejoin="round" fill-opacity="0.840"/>
<path d="M558.6 157.8 L563.6 154.1 L563.7 148.4 L558.6 152.8Z" fill="#4a8e42" stroke="#8cf86e" stroke-width="0.800" stroke-linejoin="round" fill-opacity="0.840"/>
<path d="M553.7 160.8 L558.6 157.8 L558.6 152.8 L553.6 156.3Z" fill="#4d9244" stroke="#8cf86e" stroke-width="0.800" stroke-linejoin="round" fill-opacity="0.840"/>
<path d="M549.1 160.1 L553.7 160.8 L553.6 156.3 L549 155.8Z" fill="#5bae51" stroke="#8cf86e" stroke-width="0.800" stroke-linejoin="round" fill-opacity="0.840"/>
<path d="M448.6 234.2 L452.9 238.4 L457.3 239.3 L453 235.2Z" fill="#44823c" stroke="#8cf86e" stroke-width="0.800" stroke-linejoin="round" fill-opacity="0.840"/>
<path d="M449.7 256.6 L446.9 256.7 L452.5 257.4 L455.2 257.2Z" fill="#4a8d41" stroke="#8cf86e" stroke-width="0.800" stroke-linejoin="round" fill-opacity="0.840"/>
<path d="M452.9 238.4 L457 242.9 L461.3 243.7 L457.3 239.3Z" fill="#44823c" stroke="#8cf86e" stroke-width="0.800" stroke-linejoin="round" fill-opacity="0.840"/>
<path d="M539.2 146.4 L543.9 151.3 L542.3 147.6 L537.2 142.4Z" fill="#56a44c" stroke="#8cf86e" stroke-width="0.800" stroke-linejoin="round" fill-opacity="0.840"/>
<path d="M454 251.9 L449.7 256.6 L455.2 257.2 L458.9 252.7Z" fill="#4b9043" stroke="#8cf86e" stroke-width="0.800" stroke-linejoin="round" fill-opacity="0.840"/>
<path d="M457 242.9 L457.3 247.5 L461.8 248.3 L461.3 243.7Z" fill="#47883f" stroke="#8cf86e" stroke-width="0.800" stroke-linejoin="round" fill-opacity="0.840"/>
<path d="M457.3 247.5 L454 251.9 L458.9 252.7 L461.8 248.3Z" fill="#4b8f42" stroke="#8cf86e" stroke-width="0.800" stroke-linejoin="round" fill-opacity="0.840"/>
<path d="M543.9 151.3 L549 155.8 L547.7 152.5 L542.3 147.6Z" fill="#56a54c" stroke="#8cf86e" stroke-width="0.800" stroke-linejoin="round" fill-opacity="0.840"/>
<path d="M563.7 148.4 L563.9 145.7 L562.5 141 L562.4 143.9Z" fill="#44823c" stroke="#8cf86e" stroke-width="0.800" stroke-linejoin="round" fill-opacity="0.840"/>
<path d="M558.6 152.8 L563.7 148.4 L562.4 143.9 L557.2 148.8Z" fill="#4a8d41" stroke="#8cf86e" stroke-width="0.800" stroke-linejoin="round" fill-opacity="0.840"/>
<path d="M445.1 232.1 L449.6 236.4 L452.9 238.4 L448.6 234.2Z" fill="#44823c" stroke="#8cf86e" stroke-width="0.800" stroke-linejoin="round" fill-opacity="0.840"/>
<path d="M549 155.8 L553.6 156.3 L552.2 152.8 L547.7 152.5Z" fill="#56a34c" stroke="#8cf86e" stroke-width="0.800" stroke-linejoin="round" fill-opacity="0.840"/>
<path d="M553.6 156.3 L558.6 152.8 L557.2 148.8 L552.2 152.8Z" fill="#4c9043" stroke="#8cf86e" stroke-width="0.800" stroke-linejoin="round" fill-opacity="0.840"/>
<path d="M449.6 236.4 L453.7 241 L457 242.9 L452.9 238.4Z" fill="#44823c" stroke="#8cf86e" stroke-width="0.800" stroke-linejoin="round" fill-opacity="0.840"/>
<path d="M453.7 241 L453.9 245.5 L457.3 247.5 L457 242.9Z" fill="#44823c" stroke="#8cf86e" stroke-width="0.800" stroke-linejoin="round" fill-opacity="0.840"/>
<path d="M445.4 254.4 L442.5 254.5 L446.9 256.7 L449.7 256.6Z" fill="#509846" stroke="#8cf86e" stroke-width="0.800" stroke-linejoin="round" fill-opacity="0.840"/>
<path d="M450.1 249.9 L445.4 254.4 L449.7 256.6 L454 251.9Z" fill="#4b9043" stroke="#8cf86e" stroke-width="0.800" stroke-linejoin="round" fill-opacity="0.840"/>
<path d="M453.9 245.5 L450.1 249.9 L454 251.9 L457.3 247.5Z" fill="#4a8e42" stroke="#8cf86e" stroke-width="0.800" stroke-linejoin="round" fill-opacity="0.840"/>
<path d="M542.3 147.6 L547.7 152.5 L545.2 150.2 L539.5 145Z" fill="#4e9645" stroke="#8cf86e" stroke-width="0.800" stroke-linejoin="round" fill-opacity="0.840"/>
<path d="M562.5 141 L556.5 134 L553.1 130.3 L559.5 137.7Z" fill="#44823c" stroke="#8cf86e" stroke-width="0.800" stroke-linejoin="round" fill-opacity="0.840"/>
<path d="M547.7 152.5 L552.2 152.8 L549.7 150.4 L545.2 150.2Z" fill="#4f9846" stroke="#8cf86e" stroke-width="0.800" stroke-linejoin="round" fill-opacity="0.840"/>
<path d="M552.2 152.8 L557.2 148.8 L554.5 146 L549.7 150.4Z" fill="#4b8f42" stroke="#8cf86e" stroke-width="0.800" stroke-linejoin="round" fill-opacity="0.840"/>
<path d="M562.4 143.9 L562.5 141 L559.5 137.7 L559.5 140.7Z" fill="#44823c" stroke="#8cf86e" stroke-width="0.800" stroke-linejoin="round" fill-opacity="0.840"/>
<path d="M557.2 148.8 L562.4 143.9 L559.5 140.7 L554.5 146Z" fill="#4a8d41" stroke="#8cf86e" stroke-width="0.800" stroke-linejoin="round" fill-opacity="0.840"/>
<path d="M451.6 237.9 L451.7 242.3 L453.9 245.5 L453.7 241Z" fill="#44823c" stroke="#8cf86e" stroke-width="0.800" stroke-linejoin="round" fill-opacity="0.840"/>
<path d="M439.4 250.9 L433 245.4 L436.2 249.2 L442.5 254.5Z" fill="#56a34c" stroke="#8cf86e" stroke-width="0.800" stroke-linejoin="round" fill-opacity="0.840"/>
<path d="M451.7 242.3 L447.6 246.6 L450.1 249.9 L453.9 245.5Z" fill="#4a8c41" stroke="#8cf86e" stroke-width="0.800" stroke-linejoin="round" fill-opacity="0.840"/>
<path d="M553.1 130.3 L545.5 124.4 L540.2 121 L548.2 127.3Z" fill="#44823c" stroke="#8cf86e" stroke-width="0.800" stroke-linejoin="round" fill-opacity="0.840"/>
<path d="M447.6 246.6 L442.4 250.9 L445.4 254.4 L450.1 249.9Z" fill="#4b9043" stroke="#8cf86e" stroke-width="0.800" stroke-linejoin="round" fill-opacity="0.840"/>
<path d="M442.4 250.9 L439.4 250.9 L442.5 254.5 L445.4 254.4Z" fill="#55a34b" stroke="#8cf86e" stroke-width="0.800" stroke-linejoin="round" fill-opacity="0.840"/>
<path d="M545.2 150.2 L549.7 150.4 L545.5 149.1 L541.2 149Z" fill="#498b40" stroke="#8cf86e" stroke-width="0.800" stroke-linejoin="round" fill-opacity="0.840"/>
<path d="M559.5 137.7 L553.1 130.3 L548.2 127.3 L555 135.1Z" fill="#44823c" stroke="#8cf86e" stroke-width="0.800" stroke-linejoin="round" fill-opacity="0.840"/>
<path d="M549.7 150.4 L554.5 146 L550.3 144.2 L545.5 149.1Z" fill="#4a8d41" stroke="#8cf86e" stroke-width="0.800" stroke-linejoin="round" fill-opacity="0.840"/>
<path d="M431.3 240.2 L426.2 233.6 L428 238.8 L433 245.4Z" fill="#5bae51" stroke="#8cf86e" stroke-width="0.800" stroke-linejoin="round" fill-opacity="0.840"/>
<path d="M554.5 146 L559.5 140.7 L555.1 138.2 L550.3 144.2Z" fill="#4a8d41" stroke="#8cf86e" stroke-width="0.800" stroke-linejoin="round" fill-opacity="0.840"/>
<path d="M559.5 140.7 L559.5 137.7 L555 135.1 L555.1 138.2Z" fill="#44833c" stroke="#8cf86e" stroke-width="0.800" stroke-linejoin="round" fill-opacity="0.840"/>
<path d="M450.6 233.8 L450.7 238 L451.7 242.3 L451.6 237.9Z" fill="#44823c" stroke="#8cf86e" stroke-width="0.800" stroke-linejoin="round" fill-opacity="0.840"/>
<path d="M450.7 238 L446.3 242 L447.6 246.6 L451.7 242.3Z" fill="#498b40" stroke="#8cf86e" stroke-width="0.800" stroke-linejoin="round" fill-opacity="0.840"/>
<path d="M437.8 245.8 L431.3 240.2 L433 245.4 L439.4 250.9Z" fill="#5db152" stroke="#8cf86e" stroke-width="0.800" stroke-linejoin="round" fill-opacity="0.840"/>
<path d="M446.3 242 L440.9 246 L442.4 250.9 L447.6 246.6Z" fill="#4c9043" stroke="#8cf86e" stroke-width="0.800" stroke-linejoin="round" fill-opacity="0.840"/>
<path d="M440.9 246 L437.8 245.8 L439.4 250.9 L442.4 250.9Z" fill="#5aad50" stroke="#8cf86e" stroke-width="0.800" stroke-linejoin="round" fill-opacity="0.840"/>
<path d="M548.2 127.3 L540.2 121 L534.4 119.9 L542.6 126.5Z" fill="#47883f" stroke="#8cf86e" stroke-width="0.800" stroke-linejoin="round" fill-opacity="0.840"/>
<path d="M545.5 149.1 L550.3 144.2 L545.6 144 L541.1 149.2Z" fill="#498c41" stroke="#8cf86e" stroke-width="0.800" stroke-linejoin="round" fill-opacity="0.840"/>
<path d="M555 135.1 L548.2 127.3 L542.6 126.5 L549.8 134.6Z" fill="#488a40" stroke="#8cf86e" stroke-width="0.800" stroke-linejoin="round" fill-opacity="0.840"/>
<path d="M431.2 233.7 L425.7 226.7 L426.2 233.6 L431.3 240.2Z" fill="#62bb57" stroke="#8cf86e" stroke-width="0.800" stroke-linejoin="round" fill-opacity="0.840"/>
<path d="M550.3 144.2 L555.1 138.2 L550.1 137.7 L545.6 144Z" fill="#4a8d41" stroke="#8cf86e" stroke-width="0.800" stroke-linejoin="round" fill-opacity="0.840"/>
<path d="M555.1 138.2 L555 135.1 L549.8 134.6 L550.1 137.7Z" fill="#4b8f42" stroke="#8cf86e" stroke-width="0.800" stroke-linejoin="round" fill-opacity="0.840"/>
<path d="M451.2 232.9 L446.7 236.4 L446.3 242 L450.7 238Z" fill="#47883f" stroke="#8cf86e" stroke-width="0.800" stroke-linejoin="round" fill-opacity="0.840"/>
<path d="M438.1 239.7 L431.2 233.7 L431.3 240.2 L437.8 245.8Z" fill="#64be58" stroke="#8cf86e" stroke-width="0.800" stroke-linejoin="round" fill-opacity="0.840"/>
<path d="M446.7 236.4 L441.2 240 L440.9 246 L446.3 242Z" fill="#4a8e42" stroke="#8cf86e" stroke-width="0.800" stroke-linejoin="round" fill-opacity="0.840"/>
<path d="M441.2 240 L438.1 239.7 L437.8 245.8 L440.9 246Z" fill="#5fb454" stroke="#8cf86e" stroke-width="0.800" stroke-linejoin="round" fill-opacity="0.840"/>
<path d="M542.6 126.5 L534.4 119.9 L527.5 118.5 L536 125.5Z" fill="#47883f" stroke="#8cf86e" stroke-width="0.800" stroke-linejoin="round" fill-opacity="0.840"/>
<path d="M541.1 149.2 L545.6 144 L539.7 144.4 L535.3 150.6Z" fill="#498b40" stroke="#8cf86e" stroke-width="0.800" stroke-linejoin="round" fill-opacity="0.840"/>
<path d="M426.9 218.7 L427.2 216.3 L426.1 224.2 L425.7 226.7Z" fill="#58a84e" stroke="#8cf86e" stroke-width="0.800" stroke-linejoin="round" fill-opacity="0.840"/>
<path d="M432.7 225.9 L426.9 218.7 L425.7 226.7 L431.2 233.7Z" fill="#68c75c" stroke="#8cf86e" stroke-width="0.800" stroke-linejoin="round" fill-opacity="0.840"/>
<path d="M453.1 226.8 L448.6 229.9 L446.7 236.4 L451.2 232.9Z" fill="#47873f" stroke="#8cf86e" stroke-width="0.800" stroke-linejoin="round" fill-opacity="0.840"/>
<path d="M549.8 134.6 L542.6 126.5 L536 125.5 L543.7 134Z" fill="#488a40" stroke="#8cf86e" stroke-width="0.800" stroke-linejoin="round" fill-opacity="0.840"/>
<path d="M545.6 144 L550.1 137.7 L544.2 137.1 L539.7 144.4Z" fill="#4a8d41" stroke="#8cf86e" stroke-width="0.800" stroke-linejoin="round" fill-opacity="0.840"/>
<path d="M550.1 137.7 L549.8 134.6 L543.7 134 L544.2 137.1Z" fill="#4b8f42" stroke="#8cf86e" stroke-width="0.800" stroke-linejoin="round" fill-opacity="0.840"/>
<path d="M448.6 229.9 L443.1 232.9 L441.2 240 L446.7 236.4Z" fill="#4b8f42" stroke="#8cf86e" stroke-width="0.800" stroke-linejoin="round" fill-opacity="0.840"/>
<path d="M440 232.3 L432.7 225.9 L431.2 233.7 L438.1 239.7Z" fill="#6aca5d" stroke="#8cf86e" stroke-width="0.800" stroke-linejoin="round" fill-opacity="0.840"/>
<path d="M443.1 232.9 L440 232.3 L438.1 239.7 L441.2 240Z" fill="#63bd57" stroke="#8cf86e" stroke-width="0.800" stroke-linejoin="round" fill-opacity="0.840"/>
<path d="M429.8 209.6 L430 207.5 L427.2 216.3 L426.9 218.7Z" fill="#5caf51" stroke="#8cf86e" stroke-width="0.800" stroke-linejoin="round" fill-opacity="0.840"/>
<path d="M535.3 150.6 L539.7 144.4 L533.2 145.3 L528.6 153.2Z" fill="#488a40" stroke="#8cf86e" stroke-width="0.800" stroke-linejoin="round" fill-opacity="0.840"/>
<path d="M536 125.5 L527.5 118.5 L520 117.1 L528.7 124.5Z" fill="#47893f" stroke="#8cf86e" stroke-width="0.800" stroke-linejoin="round" fill-opacity="0.840"/>
<path d="M456.2 220 L451.9 222.5 L448.6 229.9 L453.1 226.8Z" fill="#47873f" stroke="#8cf86e" stroke-width="0.800" stroke-linejoin="round" fill-opacity="0.840"/>
<path d="M436 217.1 L429.8 209.6 L426.9 218.7 L432.7 225.9Z" fill="#6dd161" stroke="#8cf86e" stroke-width="0.800" stroke-linejoin="round" fill-opacity="0.840"/>
<path d="M539.7 144.4 L544.2 137.1 L537.6 136.3 L533.2 145.3Z" fill="#4a8e42" stroke="#8cf86e" stroke-width="0.800" stroke-linejoin="round" fill-opacity="0.840"/>
<path d="M451.9 222.5 L446.6 224.8 L443.1 232.9 L448.6 229.9Z" fill="#4b8f42" stroke="#8cf86e" stroke-width="0.800" stroke-linejoin="round" fill-opacity="0.840"/>
<path d="M543.7 134 L536 125.5 L528.7 124.5 L536.9 133.3Z" fill="#488a40" stroke="#8cf86e" stroke-width="0.800" stroke-linejoin="round" fill-opacity="0.840"/>
<path d="M443.5 223.9 L436 217.1 L432.7 225.9 L440 232.3Z" fill="#6fd362" stroke="#8cf86e" stroke-width="0.800" stroke-linejoin="round" fill-opacity="0.840"/>
<path d="M434.2 198.9 L434.2 197.1 L430 207.5 L429.8 209.6Z" fill="#5eb453" stroke="#8cf86e" stroke-width="0.800" stroke-linejoin="round" fill-opacity="0.840"/>
<path d="M528.6 153.2 L533.2 145.3 L525.6 146.8 L521.3 157.1Z" fill="#488a40" stroke="#8cf86e" stroke-width="0.800" stroke-linejoin="round" fill-opacity="0.840"/>
<path d="M544.2 137.1 L543.7 134 L536.9 133.3 L537.6 136.3Z" fill="#4b8f42" stroke="#8cf86e" stroke-width="0.800" stroke-linejoin="round" fill-opacity="0.840"/>
<path d="M446.6 224.8 L443.5 223.9 L440 232.3 L443.1 232.9Z" fill="#67c45b" stroke="#8cf86e" stroke-width="0.800" stroke-linejoin="round" fill-opacity="0.840"/>
<path d="M461.1 211.9 L456.9 213.6 L451.9 222.5 L456.2 220Z" fill="#47883f" stroke="#8cf86e" stroke-width="0.800" stroke-linejoin="round" fill-opacity="0.840"/>
<path d="M440.8 206.6 L434.2 198.9 L429.8 209.6 L436 217.1Z" fill="#71d764" stroke="#8cf86e" stroke-width="0.800" stroke-linejoin="round" fill-opacity="0.840"/>
<path d="M456.9 213.6 L451.7 215.1 L446.6 224.8 L451.9 222.5Z" fill="#4b9043" stroke="#8cf86e" stroke-width="0.800" stroke-linejoin="round" fill-opacity="0.840"/>
<path d="M439.5 189.5 L439.3 187.9 L434.2 197.1 L434.2 198.9Z" fill="#61b956" stroke="#8cf86e" stroke-width="0.800" stroke-linejoin="round" fill-opacity="0.840"/>
<path d="M466.2 204.9 L462.3 205.9 L456.9 213.6 L461.1 211.9Z" fill="#47883f" stroke="#8cf86e" stroke-width="0.800" stroke-linejoin="round" fill-opacity="0.840"/>
<path d="M528.7 124.5 L520 117.1 L511.1 115.4 L520.1 123.2Z" fill="#48893f" stroke="#8cf86e" stroke-width="0.800" stroke-linejoin="round" fill-opacity="0.840"/>
<path d="M448.8 214 L440.8 206.6 L436 217.1 L443.5 223.9Z" fill="#72d965" stroke="#8cf86e" stroke-width="0.800" stroke-linejoin="round" fill-opacity="0.840"/>
<path d="M521.3 157.1 L525.6 146.8 L516.4 148.8 L513.3 162.3Z" fill="#498b40" stroke="#8cf86e" stroke-width="0.800" stroke-linejoin="round" fill-opacity="0.840"/>
<path d="M451.7 215.1 L448.8 214 L443.5 223.9 L446.6 224.8Z" fill="#69c95d" stroke="#8cf86e" stroke-width="0.800" stroke-linejoin="round" fill-opacity="0.840"/>
<path d="M533.2 145.3 L537.6 136.3 L529.7 135.4 L525.6 146.8Z" fill="#4a8e42" stroke="#8cf86e" stroke-width="0.800" stroke-linejoin="round" fill-opacity="0.840"/>
<path d="M446.5 197.3 L439.5 189.5 L434.2 198.9 L440.8 206.6Z" fill="#74de67" stroke="#8cf86e" stroke-width="0.800" stroke-linejoin="round" fill-opacity="0.840"/>
<path d="M472.8 197 L468.9 196.9 L462.3 205.9 L466.2 204.9Z" fill="#488a40" stroke="#8cf86e" stroke-width="0.800" stroke-linejoin="round" fill-opacity="0.840"/>
<path d="M445.6 178.5 L445.2 177.2 L439.3 187.9 L439.5 189.5Z" fill="#62bb56" stroke="#8cf86e" stroke-width="0.800" stroke-linejoin="round" fill-opacity="0.840"/>
<path d="M536.9 133.3 L528.7 124.5 L520.1 123.2 L528.7 132.4Z" fill="#488a40" stroke="#8cf86e" stroke-width="0.800" stroke-linejoin="round" fill-opacity="0.840"/>
<path d="M462.3 205.9 L457.4 206.4 L451.7 215.1 L456.9 213.6Z" fill="#4c9043" stroke="#8cf86e" stroke-width="0.800" stroke-linejoin="round" fill-opacity="0.840"/>
<path d="M513.3 162.3 L516.4 148.8 L505.5 161.8 L505.2 167.9Z" fill="#4b8f42" stroke="#8cf86e" stroke-width="0.800" stroke-linejoin="round" fill-opacity="0.840"/>
<path d="M537.6 136.3 L536.9 133.3 L528.7 132.4 L529.7 135.4Z" fill="#4b8f42" stroke="#8cf86e" stroke-width="0.800" stroke-linejoin="round" fill-opacity="0.840"/>
<path d="M454.7 205.1 L446.5 197.3 L440.8 206.6 L448.8 214Z" fill="#75e068" stroke="#8cf86e" stroke-width="0.800" stroke-linejoin="round" fill-opacity="0.840"/>
<path d="M480.2 189.2 L476.2 187.5 L468.9 196.9 L472.8 197Z" fill="#498c41" stroke="#8cf86e" stroke-width="0.800" stroke-linejoin="round" fill-opacity="0.840"/>
<path d="M453.1 186.5 L445.6 178.5 L439.5 189.5 L446.5 197.3Z" fill="#74de67" stroke="#8cf86e" stroke-width="0.800" stroke-linejoin="round" fill-opacity="0.840"/>
<path d="M457.4 206.4 L454.7 205.1 L448.8 214 L451.7 215.1Z" fill="#6cce5f" stroke="#8cf86e" stroke-width="0.800" stroke-linejoin="round" fill-opacity="0.840"/>
<path d="M505.2 167.9 L505.5 161.8 L494.3 165.1 L497 174.4Z" fill="#4a8d41" stroke="#8cf86e" stroke-width="0.800" stroke-linejoin="round" fill-opacity="0.840"/>
<path d="M488.2 181.6 L484.5 177.2 L476.2 187.5 L480.2 189.2Z" fill="#4b8e42" stroke="#8cf86e" stroke-width="0.800" stroke-linejoin="round" fill-opacity="0.840"/>
<path d="M468.9 196.9 L464.1 196.4 L457.4 206.4 L462.3 205.9Z" fill="#4c9143" stroke="#8cf86e" stroke-width="0.800" stroke-linejoin="round" fill-opacity="0.840"/>
<path d="M452.3 166.4 L451.8 165.4 L445.2 177.2 L445.6 178.5Z" fill="#63bd58" stroke="#8cf86e" stroke-width="0.800" stroke-linejoin="round" fill-opacity="0.840"/>
<path d="M497 174.4 L494.3 165.1 L484.5 177.2 L488.2 181.6Z" fill="#4c9043" stroke="#8cf86e" stroke-width="0.800" stroke-linejoin="round" fill-opacity="0.840"/>
<path d="M461.5 194.8 L453.1 186.5 L446.5 197.3 L454.7 205.1Z" fill="#75e068" stroke="#8cf86e" stroke-width="0.800" stroke-linejoin="round" fill-opacity="0.840"/>
<path d="M464.1 196.4 L461.5 194.8 L454.7 205.1 L457.4 206.4Z" fill="#6ccf60" stroke="#8cf86e" stroke-width="0.800" stroke-linejoin="round" fill-opacity="0.840"/>
<path d="M460.3 174.6 L452.3 166.4 L445.6 178.5 L453.1 186.5Z" fill="#74de67" stroke="#8cf86e" stroke-width="0.800" stroke-linejoin="round" fill-opacity="0.840"/>
<path d="M525.6 146.8 L529.7 135.4 L519.3 134 L516.4 148.8Z" fill="#4b8e42" stroke="#8cf86e" stroke-width="0.800" stroke-linejoin="round" fill-opacity="0.840"/>
<path d="M499.5 113.3 L497.8 113.2 L484.1 134 L485.6 134.2Z" fill="#6cce5f" stroke="#8cf86e" stroke-width="0.800" stroke-linejoin="round" fill-opacity="0.840"/>
<path d="M476.2 187.5 L471.4 185.2 L464.1 196.4 L468.9 196.9Z" fill="#4c9143" stroke="#8cf86e" stroke-width="0.800" stroke-linejoin="round" fill-opacity="0.840"/>
<path d="M520.1 123.2 L511.1 115.4 L499.5 113.3 L508.9 121.6Z" fill="#48893f" stroke="#8cf86e" stroke-width="0.800" stroke-linejoin="round" fill-opacity="0.840"/>
<path d="M460.3 152.3 L459.5 151.5 L451.8 165.4 L452.3 166.4Z" fill="#65c059" stroke="#8cf86e" stroke-width="0.800" stroke-linejoin="round" fill-opacity="0.840"/>
<path d="M469.1 183.3 L460.3 174.6 L453.1 186.5 L461.5 194.8Z" fill="#75e068" stroke="#8cf86e" stroke-width="0.800" stroke-linejoin="round" fill-opacity="0.840"/>
<path d="M516.4 148.8 L519.3 134 L505.4 154.8 L505.5 161.8Z" fill="#4c9143" stroke="#8cf86e" stroke-width="0.800" stroke-linejoin="round" fill-opacity="0.840"/>
<path d="M508.9 121.6 L499.5 113.3 L485.6 134.2 L494.7 142.7Z" fill="#76e168" stroke="#8cf86e" stroke-width="0.800" stroke-linejoin="round" fill-opacity="0.840"/>
<path d="M471.4 185.2 L469.1 183.3 L461.5 194.8 L464.1 196.4Z" fill="#6dd161" stroke="#8cf86e" stroke-width="0.800" stroke-linejoin="round" fill-opacity="0.840"/>
<path d="M528.7 132.4 L520.1 123.2 L508.9 121.6 L518 131.2Z" fill="#488a40" stroke="#8cf86e" stroke-width="0.800" stroke-linejoin="round" fill-opacity="0.840"/>
<path d="M485.6 134.2 L484.1 134 L469.6 133.6 L470.7 134.1Z" fill="#46863e" stroke="#8cf86e" stroke-width="0.800" stroke-linejoin="round" fill-opacity="0.840"/>
<path d="M484.5 177.2 L480 172 L471.4 185.2 L476.2 187.5Z" fill="#4c9244" stroke="#8cf86e" stroke-width="0.800" stroke-linejoin="round" fill-opacity="0.840"/>
<path d="M468.8 160.7 L460.3 152.3 L452.3 166.4 L460.3 174.6Z" fill="#75de67" stroke="#8cf86e" stroke-width="0.800" stroke-linejoin="round" fill-opacity="0.840"/>
<path d="M529.7 135.4 L528.7 132.4 L518 131.2 L519.3 134Z" fill="#4b8f42" stroke="#8cf86e" stroke-width="0.800" stroke-linejoin="round" fill-opacity="0.840"/>
<path d="M505.5 161.8 L505.4 154.8 L491 154.8 L494.3 165.1Z" fill="#4c9143" stroke="#8cf86e" stroke-width="0.800" stroke-linejoin="round" fill-opacity="0.840"/>
<path d="M518 131.2 L508.9 121.6 L494.7 142.7 L503.9 152.2Z" fill="#76e269" stroke="#8cf86e" stroke-width="0.800" stroke-linejoin="round" fill-opacity="0.840"/>
<path d="M494.7 142.7 L485.6 134.2 L470.7 134.1 L479.8 142.8Z" fill="#4c9143" stroke="#8cf86e" stroke-width="0.800" stroke-linejoin="round" fill-opacity="0.840"/>
<path d="M470.7 134.1 L469.6 133.6 L459.5 151.5 L460.3 152.3Z" fill="#67c55b" stroke="#8cf86e" stroke-width="0.800" stroke-linejoin="round" fill-opacity="0.840"/>
<path d="M477.9 169.8 L468.8 160.7 L460.3 174.6 L469.1 183.3Z" fill="#75e068" stroke="#8cf86e" stroke-width="0.800" stroke-linejoin="round" fill-opacity="0.840"/>
<path d="M519.3 134 L518 131.2 L503.9 152.2 L505.4 154.8Z" fill="#74dd66" stroke="#8cf86e" stroke-width="0.800" stroke-linejoin="round" fill-opacity="0.840"/>
<path d="M480 172 L477.9 169.8 L469.1 183.3 L471.4 185.2Z" fill="#6fd362" stroke="#8cf86e" stroke-width="0.800" stroke-linejoin="round" fill-opacity="0.840"/>
<path d="M494.3 165.1 L491 154.8 L480 172 L484.5 177.2Z" fill="#4d9344" stroke="#8cf86e" stroke-width="0.800" stroke-linejoin="round" fill-opacity="0.840"/>
<path d="M503.9 152.2 L494.7 142.7 L479.8 142.8 L489.2 152.3Z" fill="#4c9243" stroke="#8cf86e" stroke-width="0.800" stroke-linejoin="round" fill-opacity="0.840"/>
<path d="M479.8 142.8 L470.7 134.1 L460.3 152.3 L468.8 160.7Z" fill="#75de67" stroke="#8cf86e" stroke-width="0.800" stroke-linejoin="round" fill-opacity="0.840"/>
<path d="M505.4 154.8 L503.9 152.2 L489.2 152.3 L491 154.8Z" fill="#4f9645" stroke="#8cf86e" stroke-width="0.800" stroke-linejoin="round" fill-opacity="0.840"/>
<path d="M489.2 152.3 L479.8 142.8 L468.8 160.7 L477.9 169.8Z" fill="#75e068" stroke="#8cf86e" stroke-width="0.800" stroke-linejoin="round" fill-opacity="0.840"/>
<path d="M491 154.8 L489.2 152.3 L477.9 169.8 L480 172Z" fill="#70d663" stroke="#8cf86e" stroke-width="0.800" stroke-linejoin="round" fill-opacity="0.840"/>
<path d="M485.3 146.7 L484.5 148 L483.7 149.3 L483 150.5 L482.2 151.8 L481.4 153.1 L480.6 154.3 L479.9 155.6 L479.3 157 L478.7 158.5 L478 159.8 L477.1 160.9 L476 161.9 L474.6 162.6 L473 163 L470.9 162.9 L468.2 162.2 L468.8 164.8 L469.3 167.4 L469.3 169.4 L469 171.1 L468.5 172.5 L467.7 173.7 L466.7 174.8 L465.5 175.5 L464 176 L461.9 175.9 L459.9 175.8 L460.5 178.5 L460.8 180.8 L460.7 182.6 L460.2 184.2 L459.5 185.4 L458.5 186.5 L457.3 187.2 L455.7 187.6 L453.3 187.1 L452.6 188.4 L453.2 191 L453.1 192.8 L452.6 194.3 L451.8 195.5 L450.8 196.4 L449.3 196.8 L447.2 196.7 L444.1 193.5 L443.5 190.9 L443.5 188.9 L443.9 187.4 L444.6 186.1 L445.6 185.2 L446.9 184.6 L449 184.7 L449.8 183.6 L448.9 180.6 L448.8 178.5 L449.1 176.8 L449.6 175.4 L450.4 174.2 L451.4 173.3 L452.8 172.6 L454.6 172.5 L456.7 172.7 L456.2 170.2 L455.6 167.6 L455.6 165.5 L455.9 163.8 L456.4 162.4 L457.2 161.1 L458.1 160.1 L459.3 159.3 L460.8 158.8 L462.9 158.8 L465 159 L463.8 155.8 L463.2 153.2 L463.1 151.1 L463.3 149.3 L463.8 147.7 L464.4 146.3 L465.2 145.1 L466.2 144 L467.1 142.9 L467.8 141.7 L468.6 140.4 L469.4 139.1 L470.1 137.9 L470.9 136.6 L471.7 135.3 L472.4 134Z" fill="#86b4f8" stroke="#8cf86e" stroke-width="0.800" stroke-linejoin="round"/>
<path d="M469.3 156 L471.4 157.1 L473.5 156.5 L474.8 154.4 L474.8 151.7 L473.4 149.3 L471.3 148.2 L469.2 148.9 L468 150.9 L468 153.7Z" fill="#7c9ee0" stroke="#5a78b4" stroke-width="0.600"/>
<path d="M460.8 170.1 L462.5 171 L464.2 170.5 L465.2 168.8 L465.2 166.6 L464.1 164.7 L462.4 163.8 L460.7 164.3 L459.7 166 L459.7 168.2Z" fill="#7c9ee0" stroke="#5a78b4" stroke-width="0.600"/>
<path d="M453.3 182.4 L454.8 183.2 L456.3 182.8 L457.2 181.3 L457.2 179.3 L456.2 177.6 L454.7 176.9 L453.2 177.3 L452.3 178.8 L452.4 180.7Z" fill="#7c9ee0" stroke="#5a78b4" stroke-width="0.600"/>
<path d="M447.1 192.6 L448.4 193.3 L449.6 192.9 L450.3 191.7 L450.3 190.1 L449.5 188.7 L448.3 188.1 L447.1 188.4 L446.3 189.6 L446.4 191.2Z" fill="#7c9ee0" stroke="#5a78b4" stroke-width="0.600"/>
<path d="M513.3 126.7 L514.1 126.8 L514.8 126.8 L515.5 126.8 L516.1 126.9 L516.8 126.9 L517.5 126.9 L518.2 126.9 L518.8 126.9 L519.5 126.9 L520.2 126.9 L520.8 126.9 L521.5 126.9 L522.2 126.9 L522.8 126.9 L523.5 126.9 L524.2 126.9 L524.8 126.9 L525.5 126.9 L526.1 126.9 L526.8 126.9 L527.4 126.9 L528.1 127 L528.7 127 L529.4 127 L530 127 L530.7 127 L531.3 127 L532 127 L532.6 127 L533.3 127 L533.9 127 L534.5 127 L535.2 127 L535.8 127 L536.5 127 L537.1 127 L537.7 127 L538.4 127 L539 127 L539.6 127 L540.2 127.1 L540.9 127.1 L541.5 127.1 L542.1 127.1 L542.7 127.1 L543.4 127.1 L540.2 124.1 L539.4 123.9 L538.5 123.6 L537.7 123.4 L536.8 123.2 L536 123 L535.1 122.8 L534.3 122.5 L533.4 122.3 L532.6 122.1 L531.7 121.9 L530.9 121.7 L530 121.4 L529.1 121.2 L528.3 121 L527.4 120.8 L526.5 120.5 L525.7 120.3 L524.8 120.1 L523.9 119.9 L523 119.6 L522.2 119.4 L521.3 119.2 L520.4 119 L519.5 118.7 L518.6 118.5 L517.8 118.3 L516.9 118 L516 117.8 L515.1 117.6 L514.2 117.4 L513.3 117.1 L512.4 116.9 L511.5 116.7 L510.6 116.4 L509.7 116.2 L508.8 116 L507.9 115.7 L507 115.5 L506.1 115.3 L505.2 115 L504.3 114.8 L503.4 114.6 L502.5 114.3 L501.6 114.1 L500.6 113.8 L499.8 113.7Z" fill="#86b4f8" stroke="#8cf86e" stroke-width="0.800" stroke-linejoin="round"/>
<path d="M516.3 121.7 L517.7 123.3 L517.7 124.2 L516.4 124 L514.3 122.8 L512.2 121.1 L510.8 119.4 L510.8 118.6 L512.1 118.8 L514.2 120Z" fill="#7c9ee0" stroke="#5a78b4" stroke-width="0.600"/>
<path d="M525.1 123 L526.1 124.3 L526.2 125 L525.1 124.9 L523.4 123.9 L521.7 122.5 L520.6 121.2 L520.6 120.5 L521.6 120.7 L523.3 121.6Z" fill="#7c9ee0" stroke="#5a78b4" stroke-width="0.600"/>
<path d="M532.6 124.2 L533.6 125.3 L533.6 125.9 L532.7 125.8 L531.2 125 L529.7 123.7 L528.7 122.6 L528.7 122 L529.6 122.1 L531.1 123Z" fill="#7c9ee0" stroke="#5a78b4" stroke-width="0.600"/>
<path d="M538.8 125.1 L539.6 126.1 L539.7 126.6 L538.9 126.5 L537.7 125.8 L536.5 124.8 L535.7 123.8 L535.6 123.3 L536.4 123.4 L537.6 124.1Z" fill="#7c9ee0" stroke="#5a78b4" stroke-width="0.600"/>
<path d="M492.3 125 L493.3 127.7 L493.1 118.4 L492 115.7Z" fill="#5caf51" stroke="#8cf86e" stroke-width="0.800" stroke-linejoin="round" fill-opacity="0.840"/>
<path d="M499.6 128.1 L501.1 125.5 L500.9 116.2 L499.4 118.8Z" fill="#44823c" stroke="#8cf86e" stroke-width="0.800" stroke-linejoin="round" fill-opacity="0.840"/>
<path d="M493.3 127.7 L496.3 129 L496.1 119.7 L493.1 118.4Z" fill="#62ba56" stroke="#8cf86e" stroke-width="0.800" stroke-linejoin="round" fill-opacity="0.840"/>
<path d="M496.3 129 L499.6 128.1 L499.4 118.8 L496.1 119.7Z" fill="#56a54c" stroke="#8cf86e" stroke-width="0.800" stroke-linejoin="round" fill-opacity="0.840"/>
<path d="M465.1 144.7 L466.2 147.5 L465.6 138.3 L464.6 135.6Z" fill="#5caf51" stroke="#8cf86e" stroke-width="0.800" stroke-linejoin="round" fill-opacity="0.840"/>
<path d="M472.5 147.9 L474 145.3 L473.6 136.1 L472 138.7Z" fill="#44823c" stroke="#8cf86e" stroke-width="0.800" stroke-linejoin="round" fill-opacity="0.840"/>
<path d="M466.2 147.5 L469.2 148.8 L468.7 139.6 L465.6 138.3Z" fill="#62ba56" stroke="#8cf86e" stroke-width="0.800" stroke-linejoin="round" fill-opacity="0.840"/>
<path d="M469.2 148.8 L472.5 147.9 L472 138.7 L468.7 139.6Z" fill="#56a54c" stroke="#8cf86e" stroke-width="0.800" stroke-linejoin="round" fill-opacity="0.840"/>
<path d="M515.5 147.7 L516.6 150.5 L516.6 141.3 L515.5 138.5Z" fill="#5caf51" stroke="#8cf86e" stroke-width="0.800" stroke-linejoin="round" fill-opacity="0.840"/>
<path d="M523 150.9 L524.5 148.2 L524.5 139.1 L523 141.7Z" fill="#44823c" stroke="#8cf86e" stroke-width="0.800" stroke-linejoin="round" fill-opacity="0.840"/>
<path d="M492 115.7 L493.1 118.4 L492.8 108.1 L491.7 105.3Z" fill="#5caf51" stroke="#8cf86e" stroke-width="0.800" stroke-linejoin="round" fill-opacity="0.840"/>
<path d="M516.6 150.5 L519.7 151.8 L519.7 142.6 L516.6 141.3Z" fill="#62ba56" stroke="#8cf86e" stroke-width="0.800" stroke-linejoin="round" fill-opacity="0.840"/>
<path d="M499.4 118.8 L500.9 116.2 L500.7 105.9 L499.1 108.5Z" fill="#44823c" stroke="#8cf86e" stroke-width="0.800" stroke-linejoin="round" fill-opacity="0.840"/>
<path d="M519.7 151.8 L523 150.9 L523 141.7 L519.7 142.6Z" fill="#56a54c" stroke="#8cf86e" stroke-width="0.800" stroke-linejoin="round" fill-opacity="0.840"/>
<path d="M493.1 118.4 L496.1 119.7 L495.8 109.4 L492.8 108.1Z" fill="#62ba56" stroke="#8cf86e" stroke-width="0.800" stroke-linejoin="round" fill-opacity="0.840"/>
<path d="M496.1 119.7 L499.4 118.8 L499.1 108.5 L495.8 109.4Z" fill="#56a54c" stroke="#8cf86e" stroke-width="0.800" stroke-linejoin="round" fill-opacity="0.840"/>
<path d="M492.8 108.1 L495.8 109.4 L499.1 108.5 L500.7 105.9 L499.6 103.1 L496.5 101.8 L493.2 102.8 L491.7 105.3Z" fill="#84e868" stroke="#8cf86e" stroke-width="0.800" stroke-linejoin="round"/>
<path d="M492.8 108.1L499.6 103.1M499.1 108.5L493.2 102.8" stroke="#58b048" stroke-width="0.600"/>
<path d="M488.3 167.8 L489.4 170.6 L489.1 161.6 L488 158.8Z" fill="#5caf51" stroke="#8cf86e" stroke-width="0.800" stroke-linejoin="round" fill-opacity="0.840"/>
<path d="M495.8 171 L497.3 168.3 L497.1 159.3 L495.5 162Z" fill="#44823c" stroke="#8cf86e" stroke-width="0.800" stroke-linejoin="round" fill-opacity="0.840"/>
<path d="M464.6 135.6 L465.6 138.3 L465 128.1 L464 125.3Z" fill="#5caf51" stroke="#8cf86e" stroke-width="0.800" stroke-linejoin="round" fill-opacity="0.840"/>
<path d="M489.4 170.6 L492.5 171.9 L492.2 162.9 L489.1 161.6Z" fill="#62ba56" stroke="#8cf86e" stroke-width="0.800" stroke-linejoin="round" fill-opacity="0.840"/>
<path d="M472 138.7 L473.6 136.1 L473 125.9 L471.4 128.5Z" fill="#44823c" stroke="#8cf86e" stroke-width="0.800" stroke-linejoin="round" fill-opacity="0.840"/>
<path d="M492.5 171.9 L495.8 171 L495.5 162 L492.2 162.9Z" fill="#56a54c" stroke="#8cf86e" stroke-width="0.800" stroke-linejoin="round" fill-opacity="0.840"/>
<path d="M465.6 138.3 L468.7 139.6 L468.1 129.4 L465 128.1Z" fill="#62ba56" stroke="#8cf86e" stroke-width="0.800" stroke-linejoin="round" fill-opacity="0.840"/>
<path d="M468.7 139.6 L472 138.7 L471.4 128.5 L468.1 129.4Z" fill="#56a54c" stroke="#8cf86e" stroke-width="0.800" stroke-linejoin="round" fill-opacity="0.840"/>
<path d="M496 108.6 L487.1 109.6 L490.3 114.7 L495.1 114.2Z" fill="#83b1f7" stroke="#a4c4fc" stroke-width="0.400" stroke-linejoin="round"/>
<path d="M504.7 110.6 L496 108.6 L495.1 114.2 L499.8 115.3Z" fill="#6f96d1" stroke="#a4c4fc" stroke-width="0.400" stroke-linejoin="round"/>
<path d="M487.1 109.6 L479.2 113.3 L486.1 116.7 L490.3 114.7Z" fill="#7aa5e6" stroke="#a4c4fc" stroke-width="0.400" stroke-linejoin="round"/>
<path d="M515.5 138.5 L516.6 141.3 L516.6 131.1 L515.5 128.3Z" fill="#5caf51" stroke="#8cf86e" stroke-width="0.800" stroke-linejoin="round" fill-opacity="0.840"/>
<path d="M511.8 115.2 L504.7 110.6 L499.8 115.3 L503.6 117.8Z" fill="#7ca7e9" stroke="#a4c4fc" stroke-width="0.400" stroke-linejoin="round"/>
<path d="M523 141.7 L524.5 139.1 L524.6 128.9 L523 131.5Z" fill="#44823c" stroke="#8cf86e" stroke-width="0.800" stroke-linejoin="round" fill-opacity="0.840"/>
<path d="M479.2 113.3 L473.6 119.3 L483 120 L486.1 116.7Z" fill="#86b4fc" stroke="#a4c4fc" stroke-width="0.400" stroke-linejoin="round"/>
<path d="M516.6 141.3 L519.7 142.6 L519.7 132.4 L516.6 131.1Z" fill="#62ba56" stroke="#8cf86e" stroke-width="0.800" stroke-linejoin="round" fill-opacity="0.840"/>
<path d="M519.7 142.6 L523 141.7 L523 131.5 L519.7 132.4Z" fill="#56a54c" stroke="#8cf86e" stroke-width="0.800" stroke-linejoin="round" fill-opacity="0.840"/>
<path d="M516.3 121.7 L511.8 115.2 L503.6 117.8 L506 121.3Z" fill="#769edd" stroke="#a4c4fc" stroke-width="0.400" stroke-linejoin="round"/>
<path d="M465 128.1 L468.1 129.4 L471.4 128.5 L473 125.9 L472 123.1 L468.9 121.8 L465.6 122.7 L464 125.3Z" fill="#84e868" stroke="#8cf86e" stroke-width="0.800" stroke-linejoin="round"/>
<path d="M465 128.1L472 123.1M471.4 128.5L465.6 122.7" stroke="#58b048" stroke-width="0.600"/>
<path d="M473.6 119.3 L471.1 126.6 L481.7 123.9 L483 120Z" fill="#7ca6e8" stroke="#a4c4fc" stroke-width="0.400" stroke-linejoin="round"/>
<path d="M471.1 127.2 L472.2 134.8 L472.1 134.2 L471.1 126.6Z" fill="#6e93ce" stroke="#a4c4fc" stroke-width="0.400" stroke-linejoin="round"/>
<path d="M517.5 129.3 L516.3 121.7 L506 121.3 L506.6 125.4Z" fill="#85b2f9" stroke="#a4c4fc" stroke-width="0.400" stroke-linejoin="round"/>
<path d="M516.6 131.1 L519.7 132.4 L523 131.5 L524.6 128.9 L523.5 126.1 L520.3 124.8 L517 125.7 L515.5 128.3Z" fill="#84e868" stroke="#8cf86e" stroke-width="0.800" stroke-linejoin="round"/>
<path d="M516.6 131.1L523.5 126.1M523 131.5L517 125.7" stroke="#58b048" stroke-width="0.600"/>
<path d="M471.1 126.6 L472.1 134.2 L482.3 128 L481.7 123.9Z" fill="#94c6ff" stroke="#a4c4fc" stroke-width="0.400" stroke-linejoin="round"/>
<path d="M515.1 137.3 L517.5 129.9 L517.5 129.3 L515.1 136.7Z" fill="#6d92cc" stroke="#a4c4fc" stroke-width="0.400" stroke-linejoin="round"/>
<path d="M472.2 134.8 L476.6 141.5 L476.5 140.8 L472.1 134.2Z" fill="#85b2f9" stroke="#a4c4fc" stroke-width="0.400" stroke-linejoin="round"/>
<path d="M484.7 131.5 L488.5 134.1 L493.2 135.1 L498.1 134.6 L502.3 132.6 L505.3 129.3 L506.6 125.4 L506 121.3 L503.6 117.8 L499.8 115.3 L495.1 114.2 L490.3 114.7 L486.1 116.7 L483 120 L481.7 123.9 L482.3 128Z" fill="#6a82b6" stroke="#90b0e8" stroke-width="0.600"/>
<path d="M488.5 134.1L499.8 115.3M505.3 129.3L483 120" stroke="#88a8e0" stroke-width="0.700"/>
<path d="M515.1 136.7 L517.5 129.3 L506.6 125.4 L505.3 129.3Z" fill="#759edd" stroke="#a4c4fc" stroke-width="0.400" stroke-linejoin="round"/>
<path d="M472.1 134.2 L476.5 140.8 L484.7 131.5 L482.3 128Z" fill="#88b7ff" stroke="#a4c4fc" stroke-width="0.400" stroke-linejoin="round"/>
<path d="M488 158.8 L489.1 161.6 L488.7 151.5 L487.6 148.7Z" fill="#5caf51" stroke="#8cf86e" stroke-width="0.800" stroke-linejoin="round" fill-opacity="0.840"/>
<path d="M509.5 143.4 L515.1 137.3 L515.1 136.7 L509.5 142.8Z" fill="#688cc3" stroke="#a4c4fc" stroke-width="0.400" stroke-linejoin="round"/>
<path d="M495.5 162 L497.1 159.3 L496.8 149.2 L495.2 151.9Z" fill="#44823c" stroke="#8cf86e" stroke-width="0.800" stroke-linejoin="round" fill-opacity="0.840"/>
<path d="M489.1 161.6 L492.2 162.9 L491.9 152.9 L488.7 151.5Z" fill="#62ba56" stroke="#8cf86e" stroke-width="0.800" stroke-linejoin="round" fill-opacity="0.840"/>
<path d="M476.6 141.5 L483.7 146.2 L483.7 145.6 L476.5 140.8Z" fill="#7aa5e6" stroke="#a4c4fc" stroke-width="0.400" stroke-linejoin="round"/>
<path d="M492.2 162.9 L495.5 162 L495.2 151.9 L491.9 152.9Z" fill="#56a54c" stroke="#8cf86e" stroke-width="0.800" stroke-linejoin="round" fill-opacity="0.840"/>
<path d="M509.5 142.8 L515.1 136.7 L505.3 129.3 L502.3 132.6Z" fill="#88b6ff" stroke="#a4c4fc" stroke-width="0.400" stroke-linejoin="round"/>
<path d="M476.5 140.8 L483.7 145.6 L488.5 134.1 L484.7 131.5Z" fill="#92c4ff" stroke="#a4c4fc" stroke-width="0.400" stroke-linejoin="round"/>
<path d="M501.6 147.3 L509.5 143.4 L509.5 142.8 L501.5 146.6Z" fill="#7ba5e7" stroke="#a4c4fc" stroke-width="0.400" stroke-linejoin="round"/>
<path d="M483.7 146.2 L492.5 148.2 L492.5 147.6 L483.7 145.6Z" fill="#81adf2" stroke="#a4c4fc" stroke-width="0.400" stroke-linejoin="round"/>
<path d="M501.5 146.6 L509.5 142.8 L502.3 132.6 L498.1 134.6Z" fill="#84b1f7" stroke="#a4c4fc" stroke-width="0.400" stroke-linejoin="round"/>
<path d="M483.7 145.6 L492.5 147.6 L493.2 135.1 L488.5 134.1Z" fill="#82aff4" stroke="#a4c4fc" stroke-width="0.400" stroke-linejoin="round"/>
<path d="M492.5 148.2 L501.6 147.3 L501.5 146.6 L492.5 147.6Z" fill="#6f96d1" stroke="#a4c4fc" stroke-width="0.400" stroke-linejoin="round"/>
<path d="M492.5 147.6 L501.5 146.6 L498.1 134.6 L493.2 135.1Z" fill="#95c8ff" stroke="#a4c4fc" stroke-width="0.400" stroke-linejoin="round"/>
<path d="M488.7 151.5 L491.9 152.9 L495.2 151.9 L496.8 149.2 L495.7 146.4 L492.6 145.1 L489.2 146 L487.6 148.7Z" fill="#84e868" stroke="#8cf86e" stroke-width="0.800" stroke-linejoin="round"/>
<path d="M488.7 151.5L495.7 146.4M495.2 151.9L489.2 146" stroke="#58b048" stroke-width="0.600"/>
<path d="M571.5 172.5L578.1 63.6" stroke="#0a7c58" stroke-width="1.1" fill="none"/>
<path d="M581.1 61.4L494.2 124.6" stroke="#0a7c58" stroke-width="1.1" fill="none"/>
<path d="M574.2 170.5L502.6 224.6" stroke="#0a7c58" stroke-width="1.1" fill="none"/>
<path d="M578.1 63.6 L576.5 69.1 L579.2 67.2Z" fill="#0a7c58"/>
<path d="M571.5 172.5 L570.5 169.8 L572.9 168Z" fill="#0a7c58"/>
<text transform="matrix(0.251 -4.015 -5.660 4.202 576.3 120.0)" text-anchor="middle" fill="#0c8c64" font-family="Liberation Sans,sans-serif" font-size="1.4">27.18</text>
<path d="M423.4 178.3L426.9 209.3" stroke="#0a7c58" stroke-width="1.1" fill="none"/>
<path d="M480.3 136.9L419.5 181.1" stroke="#0a7c58" stroke-width="1.1" fill="none"/>
<path d="M437.6 201.4L423.1 212.1" stroke="#0a7c58" stroke-width="1.1" fill="none"/>
<path d="M423.4 178.3 L422.5 183.4 L425.3 181.3Z" fill="#0a7c58"/>
<path d="M426.9 209.3 L425.1 206.5 L427.9 204.4Z" fill="#0a7c58"/>
<text transform="matrix(-0.440 -4.021 -6.420 4.699 427.1 192.6)" text-anchor="middle" fill="#0c8c64" font-family="Liberation Sans,sans-serif" font-size="1.4">7.70</text>
<path d="M489.4 227.9L504.6 243.4" stroke="#0a7c58" stroke-width="1.1" fill="none"/>
<path d="M488.9 213.9L489.5 229.3" stroke="#0a7c58" stroke-width="1.1" fill="none"/>
<path d="M504.4 229.6L504.7 244.8" stroke="#0a7c58" stroke-width="1.1" fill="none"/>
<path d="M489.4 227.9 L492.7 230.5 L492.7 232Z" fill="#0a7c58"/>
<path d="M504.6 243.4 L501.3 239.3 L501.3 240.8Z" fill="#0a7c58"/>
<text transform="matrix(4.780 4.874 0.093 3.359 497.2 234.9)" text-anchor="middle" fill="#0c8c64" font-family="Liberation Sans,sans-serif" font-size="1.4">3.16</text>
<path d="M380.7 324.2V308.500" stroke="#b07808" stroke-width="1.400"/>
<path d="M380.7 324.2L358.500 341.200" stroke="#a01808" stroke-width="1.300"/>
<path d="M380.7 324.2L401 343.400" stroke="#0c8c9c" stroke-width="1.300"/>
<text x="384" y="311" fill="#f0b010" font-family="DejaVu Sans,Liberation Sans,sans-serif" font-weight="bold" font-size="11">z</text>
<text x="359.500" y="344.500" fill="#e02010" font-family="DejaVu Sans,Liberation Sans,sans-serif" font-weight="bold" font-size="11">x</text>
<text x="402.500" y="345.500" fill="#18a8c0" font-family="DejaVu Sans,Liberation Sans,sans-serif" font-weight="bold" font-size="11">y</text></g>
<g clip-path="url(#cBL)"><path d="M61.5 463.9V718.4M67.5 463.9V718.4M73.5 463.9V718.4M80.5 463.9V718.4M93.5 463.9V718.4M99.5 463.9V718.4M105.5 463.9V718.4M112.5 463.9V718.4M124.5 463.9V718.4M131.5 463.9V718.4M137.5 463.9V718.4M144.5 463.9V718.4M156.5 463.9V718.4M163.5 463.9V718.4M169.5 463.9V718.4M175.5 463.9V718.4M188.5 463.9V718.4M195.5 463.9V718.4M201.5 463.9V718.4M207.5 463.9V718.4M220.5 463.9V718.4M226.5 463.9V718.4M233.5 463.9V718.4M239.5 463.9V718.4M252.5 463.9V718.4M258.5 463.9V718.4M265.5 463.9V718.4M271.5 463.9V718.4M284.5 463.9V718.4M290.5 463.9V718.4M297.5 463.9V718.4M303.5 463.9V718.4M54.7 469.5H309.9M54.7 476.5H309.9M54.7 482.5H309.9M54.7 489.5H309.9M54.7 501.5H309.9M54.7 508.5H309.9M54.7 514.5H309.9M54.7 520.5H309.9M54.7 533.5H309.9M54.7 540.5H309.9M54.7 546.5H309.9M54.7 552.5H309.9M54.7 565.5H309.9M54.7 571.5H309.9M54.7 578.5H309.9M54.7 584.5H309.9M54.7 597.5H309.9M54.7 603.5H309.9M54.7 610.5H309.9M54.7 616.5H309.9M54.7 629.5H309.9M54.7 635.5H309.9M54.7 642.5H309.9M54.7 648.5H309.9M54.7 661.5H309.9M54.7 667.5H309.9M54.7 673.5H309.9M54.7 680.5H309.9M54.7 693.5H309.9M54.7 699.5H309.9M54.7 705.5H309.9M54.7 712.5H309.9" stroke="#333" stroke-width="1.0" fill="none"/>
<path d="M54.5 463.9V718.4M86.5 463.9V718.4M118.5 463.9V718.4M150.5 463.9V718.4M182.5 463.9V718.4M214.5 463.9V718.4M246.5 463.9V718.4M277.5 463.9V718.4M309.5 463.9V718.4M54.7 463.5H309.9M54.7 495.5H309.9M54.7 527.5H309.9M54.7 559.5H309.9M54.7 591.5H309.9M54.7 622.5H309.9M54.7 654.5H309.9M54.7 686.5H309.9M54.7 718.5H309.9" stroke="#606060" stroke-width="1.0" fill="none"/>
<path d="M182.300 464V591" stroke="#0c90a8" stroke-width="2" fill="none"/>
<path d="M182.300 591.200H310" stroke="#c41c0c" stroke-width="2" fill="none"/>
<path d="M92 484.300H182M92 657.600H176M95.500 484.300V657.600" stroke="#0a7c58" stroke-width="1.200" fill="none"/>
<path d="M95.500 484.600l-1.800 6h3.600ZM95.500 657.300l-1.800 -6h3.600Z" fill="#0a7c58"/>
<text transform="translate(93.500 581.500) rotate(-90)" fill="#0c8c64" font-family="Liberation Sans,sans-serif" font-size="8.500">27.18</text>
<path d="M196 487.500H257M205 537H257M252.300 487.500V537" stroke="#0a7c58" stroke-width="1.200" fill="none"/>
<path d="M252.300 487.800l-1.600 5h3.200ZM252.300 536.700l-1.600 -5h3.200Z" fill="#0a7c58"/>
<text transform="translate(250.500 521) rotate(-90)" fill="#0c8c64" font-family="Liberation Sans,sans-serif" font-size="8.500">7.70</text>
<path d="M128 591.200H236.500" stroke="#0a7c58" stroke-width="1.500" fill="none"/>
<path d="M128 591.200l5 -1.600v3.200ZM236.500 591.200l-5 -1.600v3.200Z" fill="#0a7c58"/>
<text x="181.500" y="589.500" text-anchor="middle" fill="#0c8c64" font-family="Liberation Sans,sans-serif" font-size="8.500">16.81</text>
<path d="M131.9 540 L127.5 545.5 L123.6 551.4 L120.4 557.5 L117.8 564 L115.9 570.6 L114.6 577.3 L114 584.1 L114.1 590.8 L114.5 597.5 L115.6 604.1 L117.3 610.5 L119.7 616.8 L122.6 622.8 L126.1 628.4 L130.1 633.7 L134.6 638.5 L139.6 642.8 L145 646.7 L150.7 649.9 L156.7 652.6 L162.9 654.7 L169.2 656.2 L175.7 657 L182.2 657.2 L188.7 657 L195.2 656.2 L201.5 654.7 L207.7 652.6 L213.7 649.9 L219.4 646.7 L224.8 642.8 L229.8 638.5 L234.3 633.7 L238.3 628.4 L241.8 622.8 L244.7 616.8 L247.1 610.5 L248.8 604.1 L249.9 597.5 L250.3 590.8 L250.4 584.1 L249.8 577.3 L248.5 570.6 L246.6 564 L244 557.5 L240.8 551.4 L236.9 545.5 L232.5 540" stroke="#86f068" stroke-width="2.500" fill="none"/>
<path d="M137.3 545.5 L133.1 550.3 L129.5 555.4 L126.5 560.9 L124 566.6 L122 572.5 L120.7 578.6 L120 584.7 L119.9 590.8 L120.2 597 L121.2 603 L122.7 608.9 L124.8 614.7 L127.4 620.2 L130.6 625.4 L134.3 630.3 L138.4 634.8 L142.9 638.8 L147.8 642.4 L153.1 645.5 L158.6 648 L164.3 650 L170.2 651.4 L176.2 652.2 L182.2 652.5 L188.2 652.2 L194.2 651.4 L200.1 650 L205.8 648 L211.3 645.5 L216.6 642.4 L221.5 638.8 L226 634.8 L230.1 630.3 L233.8 625.4 L237 620.2 L239.6 614.7 L241.7 608.9 L243.2 603 L244.2 597 L244.5 590.8 L244.4 584.7 L243.7 578.6 L242.4 572.5 L240.4 566.6 L237.9 560.9 L234.9 555.4 L231.3 550.3 L227.1 545.5" stroke="#86f068" stroke-width="1" fill="none"/>
<circle cx="182.2" cy="591.2" r="55.6" stroke="#86f068" stroke-width="2.100" fill="none"/>
<path d="M143.2 551.5L131.9 540M138.6 556.7L126.4 547M134.7 562.4L121.8 554.6M131.4 568.5L118.3 562.6M129 575L115.8 570.9M127.4 581.7L114.3 579.4M126.7 588.6L114 588M126.8 595.5L114.4 596.4M127.7 602.3L115.7 604.8M129.5 609L118.1 612.9M132.1 615.4L121.4 620.6M135.5 621.4L125.7 627.8M139.7 627L130.8 634.4M144.4 632L136.7 640.4M149.8 636.4L143.2 645.5M155.6 640.1L150.4 649.8M161.9 643L157.9 653.1M168.5 645.1L165.9 655.5M175.3 646.4L174 656.9M182.2 646.8L182.2 657.2M189.1 646.4L190.4 656.9M195.9 645.1L198.5 655.5M202.5 643L206.5 653.1M208.8 640.1L214 649.8M214.6 636.4L221.2 645.5M220 632L227.7 640.4M224.7 627L233.6 634.4M228.9 621.4L238.7 627.8M232.3 615.4L243 620.6M234.9 609L246.3 612.9M236.7 602.3L248.7 604.8M237.6 595.5L250 596.4M237.7 588.6L250.4 588M237 581.7L250.1 579.4M235.4 575L248.6 570.9M233 568.5L246.1 562.6M229.7 562.4L242.6 554.6M225.8 556.7L238 547M221.2 551.5L232.5 540" stroke="#86f068" stroke-width="1" fill="none"/>
<path d="M200.6 503.5 L233.4 539.2 L229.1 544.3 L196.8 511.3 L196.8 505Z" fill="#86f068" stroke="#86f068" stroke-width="0.800" stroke-linejoin="round"/>
<path d="M206.2 513.6l1.8 2" stroke="#86b4f8" stroke-width="1.100" stroke-opacity="0.650"/>
<path d="M212 520l1.8 2" stroke="#86b4f8" stroke-width="1.100" stroke-opacity="0.650"/>
<path d="M217.6 526.1l1.8 2" stroke="#86b4f8" stroke-width="1.100" stroke-opacity="0.650"/>
<path d="M222.4 531.4l1.8 2" stroke="#86b4f8" stroke-width="1.100" stroke-opacity="0.650"/>
<path d="M227 536.4l1.8 2" stroke="#86b4f8" stroke-width="1.100" stroke-opacity="0.650"/>
<path d="M202 514.8 L199.8 519.5 L204.7 519Z" fill="#86b4f8"/>
<rect x="192.8" y="490.800" width="8.200" height="14" fill="none" stroke="#86f068" stroke-width="1.700"/>
<path d="M195.6 491V505M198.4 491V505M192.9 496.500h8" stroke="#86f068" stroke-width="1" fill="none"/>
<path d="M182.2 536.3 L196.8 511.5M182.2 536.3 L200.7 516M182.2 536.3 L205.2 521M182.2 536.3 L209.7 526M182.2 536.3 L214.2 531M193.2 514.5 L223.2 548M190.2 519 L215.2 547M187.2 524 L204.2 543M202.6 517.2 L196.9 537.9M204.2 518.8 L198.2 538.9M207.8 522.5 L201.5 539.4M209.4 524.1 L202.8 540.4M212.9 527.8 L206.3 541.5M214.5 529.4 L207.6 542.5M218.1 533.1 L211.2 544.2M219.7 534.7 L212.5 545.2M223.3 538.4 L216.1 547.6M224.9 540 L217.4 548.6M228.1 543.3 L220.4 551.3M229.7 544.9 L221.7 552.3" stroke="#86f068" stroke-width="1" fill="none"/>
<path d="M163.8 503.5 L131 539.2 L135.3 544.3 L167.6 511.3 L167.6 505Z" fill="#86f068" stroke="#86f068" stroke-width="0.800" stroke-linejoin="round"/>
<path d="M158.2 513.6l-1.8 2" stroke="#86b4f8" stroke-width="1.100" stroke-opacity="0.650"/>
<path d="M152.3 520l-1.8 2" stroke="#86b4f8" stroke-width="1.100" stroke-opacity="0.650"/>
<path d="M146.8 526.1l-1.8 2" stroke="#86b4f8" stroke-width="1.100" stroke-opacity="0.650"/>
<path d="M141.9 531.4l-1.8 2" stroke="#86b4f8" stroke-width="1.100" stroke-opacity="0.650"/>
<path d="M137.4 536.4l-1.8 2" stroke="#86b4f8" stroke-width="1.100" stroke-opacity="0.650"/>
<path d="M162.4 514.8 L164.6 519.5 L159.7 519Z" fill="#86b4f8"/>
<rect x="163.4" y="490.800" width="8.200" height="14" fill="none" stroke="#86f068" stroke-width="1.700"/>
<path d="M168.8 491V505M166 491V505M163.5 496.500h8" stroke="#86f068" stroke-width="1" fill="none"/>
<path d="M182.2 536.3 L167.6 511.5M182.2 536.3 L163.7 516M182.2 536.3 L159.2 521M182.2 536.3 L154.7 526M182.2 536.3 L150.2 531M171.2 514.5 L141.2 548M174.2 519 L149.2 547M177.2 524 L160.2 543M161.8 517.2 L167.5 537.9M160.2 518.8 L166.2 538.9M156.6 522.5 L162.9 539.4M155 524.1 L161.6 540.4M151.4 527.8 L158.1 541.5M149.8 529.4 L156.8 542.5M146.3 533.1 L153.2 544.2M144.7 534.7 L151.9 545.2M141.1 538.4 L148.3 547.6M139.5 540 L147 548.6M136.3 543.3 L144 551.3M134.7 544.9 L142.7 552.3" stroke="#86f068" stroke-width="1" fill="none"/>
<path d="M169.7 504.5 L170.7 506.5 L171.8 508.3 L172.8 509.9 L173.9 511.3 L174.9 512.5 L175.9 513.5 L177 514.4 L178 515.1 L179.1 515.7 L180.1 516 L181.2 516.2 L182.2 516.3 L183.2 516.2 L184.3 516 L185.3 515.7 L186.4 515.1 L187.4 514.4 L188.4 513.5 L189.5 512.5 L190.5 511.3 L191.6 509.9 L192.6 508.3 L193.7 506.5 L194.7 504.5M165.9 507 L167.3 509.8 L168.6 512.3 L170 514.6 L171.3 516.6 L172.7 518.4 L174 519.9 L175.4 521.1 L176.8 522.1 L178.1 522.9 L179.5 523.4 L180.8 523.7 L182.2 523.8 L183.6 523.7 L184.9 523.4 L186.3 522.9 L187.6 522.1 L189 521.1 L190.3 519.9 L191.7 518.4 L193.1 516.6 L194.4 514.6 L195.8 512.3 L197.1 509.8 L198.5 507" stroke="#86f068" stroke-width="2" fill="none"/>
<path d="M167.8 505.5 L169 507.9 L170.2 510.1 L171.4 512.1 L172.6 513.8 L173.8 515.3 L175 516.6 L176.2 517.7 L177.4 518.6 L178.6 519.2 L179.8 519.7 L181 519.9 L182.2 520 L183.4 519.9 L184.6 519.7 L185.8 519.2 L187 518.6 L188.2 517.7 L189.4 516.6 L190.6 515.3 L191.8 513.8 L193 512.1 L194.2 510.1 L195.4 507.9 L196.6 505.5M182.2 516V536.500" stroke="#86f068" stroke-width="1" fill="none"/>
<path d="M172.3 486 L192.1 486 L200 491.8 L199.5 493.2 L182.2 509.6 L164.9 493.2 L164.4 491.8Z" fill="#86b4f8"/>
<path d="M171.5 494.200L175.5 501.500M175 494.200L178 501.500M178.5 494.200L180.5 501.500M182.2 494.200L182.2 501.500M186 494.200L184 501.500M189.5 494.200L186.5 501.500M193 494.200L189 501.500" stroke="#0a1020" stroke-width="1.300" fill="none"/>
<path d="M173.500 489.800l3.200 -1.300 3.200 1.300M184.500 489.800l3.200 -1.300 3.200 1.300M169 492h26" stroke="#182848" stroke-width="0.800" fill="none" stroke-dasharray="2.500 1.500"/>
<circle cx="301" cy="404" r="18.200" stroke="#d09414" stroke-width="1" fill="none"/>
<circle cx="301" cy="404" r="15.300" stroke="#d09414" stroke-width="1" fill="none"/>
<path d="M301 384v5M301 420.500v4M282 404h4M316 404h4" stroke="#d09414" stroke-width="1.300"/>
<path d="M294.500 377.500l3 -3.200h7l3 3.200l-6.500 7ZM294.500 377.500h13M301 374.300v10" stroke="#3464c4" stroke-width="1.100" fill="none"/>
<path d="M49.5 688.5V658.5" stroke="#b07808" stroke-width="1.3" fill="none"/>
<path d="M49.5 688.5H79.5" stroke="#a01808" stroke-width="1.3" fill="none"/>
<text x="52.5" y="660" fill="#f0b010" font-family="DejaVu Sans,Liberation Sans,sans-serif" font-weight="bold" font-size="11">z</text>
<text x="82" y="691.7" fill="#e02010" font-family="DejaVu Sans,Liberation Sans,sans-serif" font-weight="bold" font-size="11">x</text>
<rect x="13" y="363.5" width="111" height="18" fill="#b2d9e8"/>
<text x="23.5" y="376.7" fill="#5c6470" font-family="Liberation Sans,sans-serif" font-size="12" letter-spacing="-0.150">Through Finger</text>
<rect x="113" y="364.5" width="1.200" height="16" fill="#223"/>
<path d="M115.8 371 h6 l-3 3.500Z" fill="#223"/></g>
<g clip-path="url(#cBR)"><path d="M364.5 439.2V725.5M372.5 439.2V725.5M380.5 439.2V725.5M388.5 439.2V725.5M404.5 439.2V725.5M412.5 439.2V725.5M420.5 439.2V725.5M428.5 439.2V725.5M444.5 439.2V725.5M452.5 439.2V725.5M459.5 439.2V725.5M467.5 439.2V725.5M483.5 439.2V725.5M491.5 439.2V725.5M499.5 439.2V725.5M507.5 439.2V725.5M523.5 439.2V725.5M531.5 439.2V725.5M539.5 439.2V725.5M547.5 439.2V725.5M562.5 439.2V725.5M570.5 439.2V725.5M578.5 439.2V725.5M586.5 439.2V725.5M602.5 439.2V725.5M610.5 439.2V725.5M618.5 439.2V725.5M626.5 439.2V725.5M642.5 439.2V725.5M650.5 439.2V725.5M657.5 439.2V725.5M665.5 439.2V725.5M357.2 446.5H673.8M357.2 454.5H673.8M357.2 462.5H673.8M357.2 470.5H673.8M357.2 486.5H673.8M357.2 494.5H673.8M357.2 502.5H673.8M357.2 510.5H673.8M357.2 526.5H673.8M357.2 534.5H673.8M357.2 541.5H673.8M357.2 549.5H673.8M357.2 565.5H673.8M357.2 573.5H673.8M357.2 581.5H673.8M357.2 589.5H673.8M357.2 605.5H673.8M357.2 613.5H673.8M357.2 621.5H673.8M357.2 629.5H673.8M357.2 644.5H673.8M357.2 652.5H673.8M357.2 660.5H673.8M357.2 668.5H673.8M357.2 684.5H673.8M357.2 692.5H673.8M357.2 700.5H673.8M357.2 708.5H673.8M357.2 724.5H673.8" stroke="#343434" stroke-width="1.0" fill="none"/>
<path d="M357.5 439.2V725.5M396.5 439.2V725.5M436.5 439.2V725.5M475.5 439.2V725.5M515.5 439.2V725.5M555.5 439.2V725.5M594.5 439.2V725.5M634.5 439.2V725.5M673.5 439.2V725.5M357.2 439.5H673.8M357.2 478.5H673.8M357.2 518.5H673.8M357.2 557.5H673.8M357.2 597.5H673.8M357.2 637.5H673.8M357.2 676.5H673.8M357.2 716.5H673.8" stroke="#626262" stroke-width="1.0" fill="none"/>
<path d="M515.400 439.500V467" stroke="#0c90a8" stroke-width="2" fill="none"/>
<path d="M515.400 597.300H674" stroke="#c41c0c" stroke-width="2" fill="none"/>
<path d="M502.300 664V700M527.600 664V700M502.300 696.300H527.600" stroke="#0a7c58" stroke-width="1.200" fill="none"/>
<path d="M502.500 696.300l5 -1.600v3.200ZM527.400 696.300l-5 -1.600v3.200Z" fill="#0a7c58"/>
<text x="515.200" y="694" text-anchor="middle" fill="#0c8c64" font-family="Liberation Sans,sans-serif" font-size="11.500">3.16</text>
<path d="M529.9 473 L537.9 473.5 L538.7 480 L538.2 490 L534.9 499 L532.1 505 L531.4 515 L530.7 525 L530 535 L529.3 545 L528.6 555 L527.9 565 L527.2 575 L526.9 585 L526.7 595 L526.4 605 L526.2 615 L525.9 625 L525.6 635 L525.4 645 L525.1 655 L524.9 665 L524.6 672 L524 676.5 L521.9 679.2 L515.4 679.8" stroke="#86f068" stroke-width="1.600" fill="none" stroke-linejoin="round"/>
<path d="M530.4 474 L530.9 490 L528.9 505 L528.1 515 L527.4 525 L526.7 535 L526 545 L525.3 555 L524.6 565 L523.9 575 L523.6 585 L523.4 595 L523.1 605 L522.9 615 L522.6 625 L522.3 635 L522.1 645 L521.8 655 L521.6 665 L521.2 672 L520.2 676.5 L515.4 677.5" stroke="#86f068" stroke-width="1.100" fill="none" stroke-linejoin="round"/>
<path d="M530.6 476L538.4 477.5M530.6 479L538.4 480.5M530.6 482L538.4 483.5M530.6 485L538.4 486.5M530.6 488L538.4 489.5M530.5 491L538 492.5M530.1 494L536.7 495.5M529.8 497L535.5 498.5M529.4 500L534.2 501.5M529 503L532.9 504.5M532.9 474 L532.9 490 L529.4 505M535.6 474 L535.6 490 L532.1 505" stroke="#86f068" stroke-width="0.900" fill="none"/>
<path d="M530.4 492 L520.9 520M530.1 497 L520.4 525M529.8 502 L519.9 530M529.5 507 L519.4 535M529.2 512 L518.9 540M532.1 505 L525.4 530 L521.4 545" stroke="#86f068" stroke-width="1" fill="none"/>
<path d="M500.9 473 L492.9 473.5 L492.1 480 L492.6 490 L495.9 499 L498.7 505 L499.4 515 L500.1 525 L500.8 535 L501.5 545 L502.2 555 L502.9 565 L503.6 575 L503.9 585 L504.1 595 L504.4 605 L504.6 615 L504.9 625 L505.2 635 L505.4 645 L505.7 655 L505.9 665 L506.2 672 L506.8 676.5 L508.9 679.2 L515.4 679.8" stroke="#86f068" stroke-width="1.600" fill="none" stroke-linejoin="round"/>
<path d="M500.4 474 L499.9 490 L501.9 505 L502.7 515 L503.4 525 L504.1 535 L504.8 545 L505.5 555 L506.2 565 L506.9 575 L507.2 585 L507.4 595 L507.7 605 L507.9 615 L508.2 625 L508.5 635 L508.7 645 L509 655 L509.2 665 L509.6 672 L510.6 676.5 L515.4 677.5" stroke="#86f068" stroke-width="1.100" fill="none" stroke-linejoin="round"/>
<path d="M500.2 476L492.4 477.5M500.2 479L492.4 480.5M500.2 482L492.4 483.5M500.2 485L492.4 486.5M500.2 488L492.4 489.5M500.3 491L492.8 492.5M500.7 494L494.1 495.5M501 497L495.3 498.5M501.4 500L496.6 501.5M501.8 503L497.9 504.5M497.9 474 L497.9 490 L501.4 505M495.2 474 L495.2 490 L498.7 505" stroke="#86f068" stroke-width="0.900" fill="none"/>
<path d="M500.4 492 L509.9 520M500.7 497 L510.4 525M501 502 L510.9 530M501.3 507 L511.4 535M501.6 512 L511.9 540M498.7 505 L505.4 530 L509.4 545" stroke="#86f068" stroke-width="1" fill="none"/>
<path d="M500 524H530.8M500.6 531.5H530.2M501.1 539H529.7M501.6 546.5H529.2M502.1 554H528.7M502.7 561.5H528.1M503.3 570.2H527.5M503.7 578.9H527.1M503.9 587.6H526.9M504.2 596.3H526.6M504.4 605H526.4M504.6 613.7H526.2M504.8 622.4H526M505.1 631.1H525.7M505.3 639.8H525.5M505.5 648.5H525.3M505.7 657.2H525.1M506 665.9H524.8M506.2 674.6H524.6" stroke="#86f068" stroke-width="1" fill="none"/>
<path d="M515.4 533V679.500" stroke="#86f068" stroke-width="1.500" fill="none"/>
<path d="M509 488 L521.8 488 L522.2 500 L520.6 512 L519.4 524 L518.2 531.5 L515.4 534 L512.6 531.5 L511.4 524 L510.2 512 L508.6 500Z" fill="#86b4f8"/>
<path d="M503 466.4 L528 466.4 L536.4 471.5 L536 473.3 L515.4 491.5 L494.8 473.3 L494.4 471.5Z" fill="#86b4f8"/>
<path d="M500 474.500L508.9 481.500M504.5 474.500L510.8 481.500M509 474.500L512.7 481.500M513.5 474.500L514.6 481.500M518 474.500L516.5 481.500M522.5 474.500L518.4 481.500M527 474.500L520.3 481.500M531 474.500L522 481.500" stroke="#0a1020" stroke-width="1.100" fill="none"/>
<path d="M505 469.500l3.500 -1.500 3.500 1.500M517 469.500l3.500 -1.500 3.500 1.500M500 472h31" stroke="#182848" stroke-width="0.800" fill="none" stroke-dasharray="3 1.500"/>
<path d="M627.500 386.500l7 -3 7.500 3l-3.500 33.500l-4 4l-4 -4Z" stroke="#d09414" stroke-width="1.300" fill="none" stroke-linejoin="round"/>
<path d="M629 390h12M631.500 403h7M631 418.500h8M634.700 384v6" stroke="#d09414" stroke-width="1.200" fill="none"/>
<path d="M623.500 377.500l4 -3h11l3.500 3l-7.500 6.500ZM623.500 377.500h18.500M635 374.500l-0.500 9" stroke="#3464c4" stroke-width="1.100" fill="none" stroke-linejoin="round"/>
<path d="M381.1 688.8V658.8" stroke="#b07808" stroke-width="1.3" fill="none"/>
<path d="M381.1 688.8H411.1" stroke="#0c7c8c" stroke-width="1.3" fill="none"/>
<text x="384.1" y="660.3" fill="#f0b010" font-family="DejaVu Sans,Liberation Sans,sans-serif" font-weight="bold" font-size="11">z</text>
<text x="413.6" y="692" fill="#18a8c0" font-family="DejaVu Sans,Liberation Sans,sans-serif" font-weight="bold" font-size="11">y</text>
<rect x="345" y="364" width="79" height="18" fill="#3cb7e2"/>
<text x="353.8" y="377.2" fill="#10285c" font-family="Liberation Sans,sans-serif" font-size="11.6" letter-spacing="-0.150">Side View</text>
<rect x="413" y="365" width="1.200" height="16" fill="#223"/>
<path d="M415.8 371.5 h6 l-3 3.500Z" fill="#223"/></g>
</svg>
<div id="cmd" class="abs"><div id="cmdtop" class="abs">Second dimension point:<br>Dimension location:</div><div id="cmdsep" class="abs"></div><div id="cmdline" class="abs">Command: <span style="display:inline-block;width:1px;height:15px;background:#b05010;vertical-align:-3px;margin-left:1px"></span></div><div id="sb1" class="abs"><svg width="16" height="32" style="position:absolute;left:0;top:0"><path d="M4.500 10 L8 6.500 L11.500 10Z" fill="#4a4a4a"/><path d="M4.500 23 L8 26.500 L11.500 23Z" fill="#4a4a4a"/></svg></div><div id="sb2" class="abs"><svg width="15" height="19" style="position:absolute;left:0;top:0"><rect x="1.500" y="0.500" width="12" height="8" fill="#f6f6f6" stroke="#b8b8b8"/><rect x="1.500" y="10.500" width="12" height="8" fill="#f6f6f6" stroke="#b8b8b8"/><path d="M5 6 L7.500 3 L10 6Z" fill="#4848b8"/><path d="M5 13 L7.500 16 L10 13Z" fill="#4848b8"/></svg></div></div>
<div class="abs hdr" style="top:17px"><span style="letter-spacing:-0.5px">GEM REPORTER</span><i></i></div>
<svg class="abs" style="left:693px;top:17px" width="16" height="25" viewBox="0 0 16 25"><rect x="1" y="0" width="15" height="25" fill="#686868"/><rect x="12" y="15" width="4" height="10" fill="#484848"/><rect x="1" y="2" width="11" height="21" fill="#1680cc"/><ellipse cx="4.500" cy="11.500" rx="5" ry="4" fill="#c8d4e0"/><ellipse cx="7" cy="10.500" rx="2.600" ry="2.300" fill="#fff"/><ellipse cx="2.200" cy="14.500" rx="2.200" ry="1.800" fill="#fff"/><path d="M2 3.500h3M6 3.500h3M2 5.500h3M6 5.500h3M2 17.500h3M6 17.500h3M2 19.500h3M6 19.500h3M2 21.500h3M6 21.500h3" stroke="#fff" stroke-width="1"/></svg>
<div class="abs lbl" style="left:689px;top:48px;width:110px;height:15px;padding-left:4.500px;border-left:none">Total Gem Weight</div>
<div class="abs blk" style="left:800px;top:48px;width:35px;height:15px;line-height:14px;font-size:11px">83</div>
<div class="abs lbl" style="left:838px;top:48px;width:105px;height:15px;padding-left:4px">Total Gem Count</div>
<div class="abs blk" style="left:944px;top:48px;width:20px;height:15px;text-align:left;padding-left:13px;font-size:12px">9</div>
<div class="abs" style="left:721px;top:72px;width:226px;height:1px;background:#161616"></div>
<div class="abs" style="left:721px;top:73px;width:226px;height:1px;background:#4a4a4a"></div>
<svg class="abs" style="left:827px;top:66px" width="14" height="14"><circle cx="7" cy="7" r="5.600" fill="#707070" stroke="#1c1c1c" stroke-width="1.400"/><path d="M3.800 9 L7 5.2 L10.2 9Z" fill="#f0f0f0"/></svg>
<div class="abs lbl" style="left:727px;top:82px;width:50px;height:17px;line-height:15px;padding-left:1px;font-size:11px">Update</div>
<div class="abs go" style="left:779px;top:83px;width:16px;height:15px"></div>
<div class="abs lbl" style="left:817px;top:82px;width:106px;height:17px;line-height:15px;padding-left:2px">Save Report</div>
<div class="abs go" style="left:925px;top:83px;width:16px;height:15px"></div>
<div id="gpanel" class="abs"></div>
<div class="abs" style="left:694px;top:109px;width:36px;height:33px;background:#333;border:1px solid #e8e8e8"></div>
<svg class="abs" style="left:696px;top:113px" width="32" height="26" viewBox="0 0 32 26"><ellipse cx="15.500" cy="13.500" rx="14.200" ry="10.300" fill="#6a74c8" transform="rotate(-7 16 13)"/><path d="M1.500 15 Q2 8 9 5 L7 12 L3.500 19Z" fill="#66688e"/><path d="M3.500 18 L8 13 L12 14 L9 21.500Z" fill="#6c8cf8"/><path d="M20 9.500 l4 -1 l3 3 l-4 1Z" fill="#7c9cff" opacity="0.700"/><path d="M8.500 20 Q10 15 17 13.500 Q24 12 27.500 14.500 Q26.500 20 18.500 22.500 Q11 23.500 8.500 20Z" fill="#fcfcff"/><path d="M26 14 l2 1 l-1 3Z" fill="#d8f0ff"/></svg>
<div class="abs gt" style="left:730px;top:109px;width:119px;height:17px">Diamond Round</div>
<div class="abs gt" style="left:848px;top:109px;width:103px;height:17px">Diamond</div>
<div class="abs gt" style="left:730px;top:125px;width:119px;height:17px">5.60 X 5.60</div>
<div class="abs gt" style="left:848px;top:125px;width:37px;height:17px">1</div>
<div class="abs gt" style="left:884px;top:125px;width:51px;height:17px">0.66tw</div>
<div class="abs go" style="left:934px;top:125px;width:16px;height:16px"></div>
<div class="abs gt" style="left:730px;top:141px;width:119px;height:17px">1.30 X 1.30</div>
<div class="abs gt" style="left:848px;top:141px;width:37px;height:17px">2</div>
<div class="abs gt" style="left:884px;top:141px;width:51px;height:17px">0.016tw</div>
<div class="abs go" style="left:934px;top:141px;width:16px;height:16px"></div>
<div class="abs gt" style="left:730px;top:157px;width:119px;height:17px">1.60 X 1.60</div>
<div class="abs gt" style="left:848px;top:157px;width:37px;height:17px">2</div>
<div class="abs gt" style="left:884px;top:157px;width:51px;height:17px">0.031tw</div>
<div class="abs go" style="left:934px;top:157px;width:16px;height:16px"></div>
<div class="abs gt" style="left:730px;top:173px;width:119px;height:17px">1.80 X 1.80</div>
<div class="abs gt" style="left:848px;top:173px;width:37px;height:17px">2</div>
<div class="abs gt" style="left:884px;top:173px;width:51px;height:17px">0.044tw</div>
<div class="abs go" style="left:934px;top:173px;width:16px;height:16px"></div>
<div class="abs gt" style="left:730px;top:189px;width:119px;height:17px">2.20 X 2.20</div>
<div class="abs gt" style="left:848px;top:189px;width:37px;height:17px">2</div>
<div class="abs gt" style="left:884px;top:189px;width:51px;height:17px">0.08tw</div>
<div class="abs go" style="left:934px;top:189px;width:16px;height:16px"></div>
<div class="abs ser" style="left:692px;top:239px;letter-spacing:0.850px">GOLD WT-6.22<br>GRM</div>
<div class="abs ser" style="left:685px;top:305px;letter-spacing:0.550px">RING SIZE-6 US</div>
<div class="abs" style="left:697px;top:405px;width:163px;height:21px;background:#c0c0c0;border:2px solid #fafafa;border-bottom-width:1px;box-shadow:inset 1px 1px 0 #8c8c8c;font:11.500px/19px 'Liberation Sans',sans-serif;color:#000;padding-left:2px;white-space:pre;letter-spacing:-0.3px">Diamond    (3.52 spg)</div>
<svg class="abs" style="left:841px;top:407px" width="17" height="17"><rect x="0.5" y="0.5" width="16" height="16" fill="#efefef" stroke="#fff"/><path d="M4.5 7 L12.5 7 L8.5 11.500Z" fill="#000"/></svg>
<div class="abs lbl" style="left:869px;top:408px;width:77px;height:17px;line-height:15px;padding-left:2px">Set Material</div>
<div class="abs go" style="left:948px;top:409px;width:16px;height:15px"></div>
<div class="abs hdr" style="top:441px"><span style="letter-spacing:-0.1px">METAL WEIGHTS</span><i></i></div>
<svg class="abs" style="left:684px;top:441px" width="25" height="25" viewBox="0 0 25 25"><rect x="0" y="0" width="25" height="25" fill="#646464"/><ellipse cx="12" cy="19.500" rx="10" ry="3.500" fill="#3a3a3a" opacity="0.600"/><ellipse cx="11.800" cy="18.100" rx="11.200" ry="4.500" fill="#1a4cf0" stroke="#5ab4ff" stroke-width="0.900"/><path d="M0.200 4.700 L12.500 3" stroke="#62b4ff" stroke-width="2" fill="none"/><path d="M10.500 1 L13.500 1.500 L12.500 4" stroke="#62b4ff" stroke-width="1.200" fill="none"/><path d="M12.900 1.700 L1.600 17.500 M12.900 1.700 L22.500 17.500 M12.200 2.500 L6.300 21.500 M12.900 2 L10.500 19.500" stroke="#7cc4ff" stroke-width="1" fill="none"/><path d="M8 7 L4 15 M12 8 L12.500 14" stroke="#1a3cc0" stroke-width="1" fill="none"/></svg>
<div class="abs" style="left:696px;top:476px;color:#e4e4e4;font:11px/13px 'DejaVu Sans',sans-serif">Library: METAL</div>
<div class="abs lbl" style="left:890px;top:475px;width:38px;height:17px;font-size:10.5px;line-height:16px;padding-left:2px;color:#ccc;border-color:#777">GV</div>
<div class="abs" style="left:912px;top:477px;width:13px;height:13px;background:#38b8b0"></div><div class="abs" style="left:918px;top:479px;width:2px;height:9px;background:#111"></div>
<div class="abs lbl" style="left:930px;top:475px;width:40px;height:17px;font-size:10.5px;line-height:16px;padding-left:2px;color:#ccc;border-color:#777">User</div>
<div class="abs" style="left:959px;top:477px;width:5px;height:13px;background:#38b8b0"></div>
<div class="abs" style="left:690px;top:498px;width:272px;height:217px;background:#222"></div>
<div class="abs" style="left:690px;top:498px;width:272px;height:24px;background:linear-gradient(#fff,#fff 70%,#e6e6e6);color:#1a1a1a;font:11.500px/26px 'DejaVu Sans',sans-serif"><span class="abs" style="left:6px">Metal</span><span class="abs" style="left:156px">Grams</span><span class="abs" style="left:206px">DWT</span><i class="abs" style="left:260px;top:2px;width:1px;height:20px;background:#e0e0e0"></i></div>
<div class="abs mrow" style="top:538px"></div>
<div class="abs mrow" style="top:555px"></div>
<div class="abs mrow" style="top:572px"></div>
<div class="abs mrow" style="top:589px"></div>
<div class="abs mrow" style="top:606px"></div>
<div class="abs mrow" style="top:623px"></div>
<div class="abs mrow" style="top:640px"></div>
<div class="abs mrow" style="top:657px"></div>
<div class="abs mrow" style="top:674px"></div>
<div class="abs mrow" style="top:691px"></div>
<div class="abs mrow" style="top:708px"></div>
<div class="abs mcol" style="left:840px"></div>
<div class="abs mcol" style="left:890px"></div>
<div class="abs mcol" style="left:950px"></div>
<div class="abs" style="left:690px;top:715px;width:272px;height:19px;background:#333"></div>
<div class="abs lbl" style="left:837px;top:721px;width:115px;height:16px;font:9.800px/12px 'DejaVu Sans',sans-serif;padding:5px 0 0 2px;color:#d4d4d4;border-color:#b4b4b4;background:#2c2c2c">Use Object Materials</div>
<div class="abs" style="left:952px;top:723px;width:10px;height:11px;background:#6a6a6a;color:#d0d0d0;font:9.800px/16px 'DejaVu Sans',sans-serif;padding-left:2px;overflow:hidden">O</div>
<div class="abs" style="left:684px;top:733px;width:278px;height:1px;background:#a4b0b8"></div>
</div>
</body></html>
